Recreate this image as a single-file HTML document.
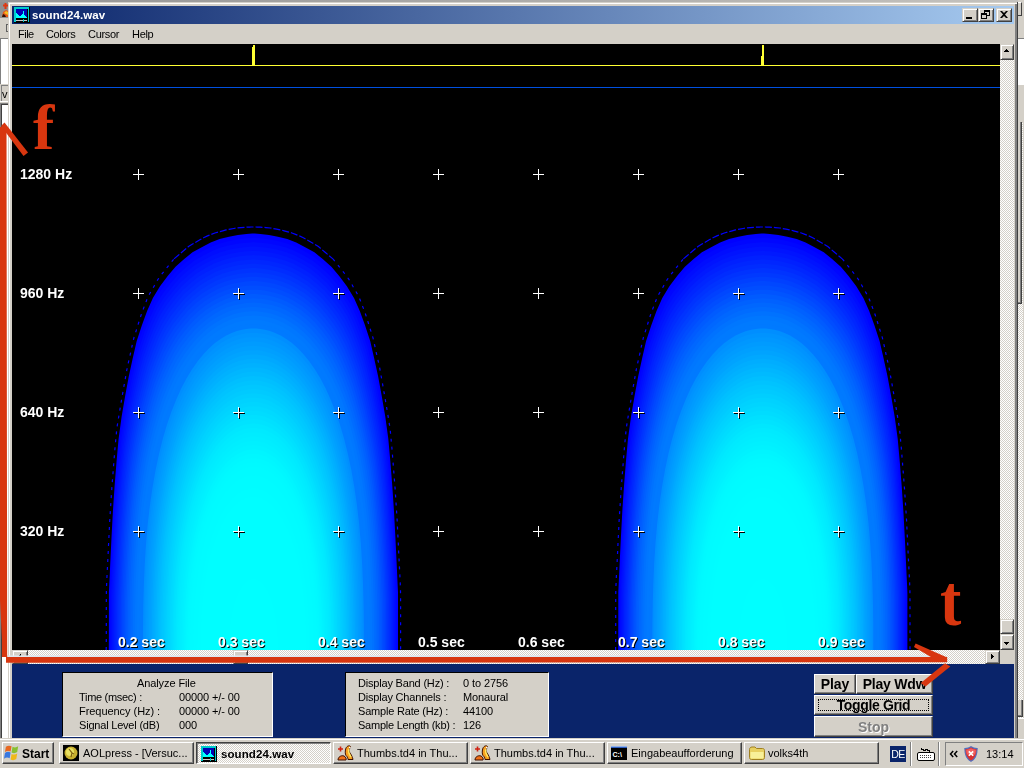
<!DOCTYPE html>
<html lang="en"><head><meta charset="utf-8"><title>sound24.wav</title>
<style>
*{margin:0;padding:0;box-sizing:border-box}
html,body{width:1024px;height:768px;overflow:hidden;background:#fff}
body{position:relative;font-family:"Liberation Sans",sans-serif;font-size:11px;color:#000;line-height:1}
.a{position:absolute}
.g{background:#d4d0c8}
.btn{position:absolute;background:#d4d0c8;border:1px solid;border-color:#d4d0c8 #404040 #404040 #d4d0c8;box-shadow:inset 1px 1px 0 #fff,inset -1px -1px 0 #808080}
.tb{position:absolute;top:742px;height:22px;width:135px;background:#d4d0c8;border:1px solid;border-color:#fff #404040 #404040 #fff;box-shadow:inset -1px -1px 0 #808080}
.tb span{will-change:transform;position:absolute;left:23px;top:5px;font-size:11px;white-space:nowrap}
.tb svg{position:absolute;left:3px;top:2px}
.chk{background:#d4d0c8 repeating-conic-gradient(#fff 0 25%,#d4d0c8 0 50%,#fff 0 75%,#d4d0c8 0 100%) 0 0/2px 2px}
.lab{will-change:transform;position:absolute;color:#fff;font:bold 14px "Liberation Sans",sans-serif;white-space:nowrap;text-shadow:1px 1px 0 #000;line-height:16px}
.t11{position:absolute;font-size:11px;white-space:nowrap;line-height:12px;will-change:transform}
.pb{will-change:transform;position:absolute;background:#d4d0c8;border:1px solid;border-color:#fff #404040 #404040 #fff;box-shadow:inset -1px -1px 0 #808080;font:bold 14px "Liberation Sans",sans-serif;text-align:center;white-space:nowrap}
</style></head><body>
<!-- background behind window: left strip -->
<div class="a" style="left:0;top:0;width:1024px;height:2px;background:linear-gradient(90deg,#949494,#c4c2be)"></div>
<div class="a" style="left:0;top:2px;width:8px;height:16px;background:#909090"></div>
<div class="a g" style="left:0;top:18px;width:8px;height:20px"></div>
<div class="a" style="left:0;top:38px;width:8px;height:46px;background:#fff;border-left:1px solid #808080;border-top:1px solid #808080"></div>
<div class="a g" style="left:0;top:84px;width:8px;height:19px"></div>
<div class="a" style="left:1px;top:85px;width:7px;height:16px;border-left:1px solid #808080;border-top:1px solid #808080"></div>
<div class="a" style="left:0;top:101px;width:8px;height:1px;background:#fff"></div>
<div class="a" style="left:0;top:103px;width:8px;height:635px;background:#fff;border-top:1px solid #808080;box-shadow:inset 1px 0 0 #808080,inset 2px 0 0 #404040,inset 0 1px 0 #404040"></div>
<svg class="a" style="left:0;top:0" width="8" height="18" viewBox="0 0 8 18"><path d="M3,5.500h5M5.500,3v6" stroke="#e03810" stroke-width="2"/><path d="M2,17l1,-5l3,-2l2,1v6z" fill="#e85818"/><path d="M4,13l2,-2l2,1v3z" fill="#f0c020"/><path d="M2,17l1,-3l2,1l1,2z" fill="#301008"/></svg>
<div class="a" style="left:6px;top:24px;width:2px;height:8px;border:1px solid #606060;border-right:0"></div>
<div class="t11" style="left:1.500px;top:88px;font-size:11px">v</div>
<!-- right strip -->
<div class="a g" style="left:1018px;top:0;width:6px;height:38px"></div>
<div class="a" style="left:1018px;top:38px;width:6px;height:1px;background:#808080"></div>
<div class="a g" style="left:1018px;top:2px;width:4px;height:14px;border-top:1px solid #fff;border-right:1px solid #404040;border-bottom:1px solid #404040"></div>
<div class="a" style="left:1018px;top:39px;width:6px;height:46px;background:#fff"></div>
<div class="a g" style="left:1018px;top:85px;width:6px;height:37px"></div>
<div class="a chk" style="left:1018px;top:122px;width:5px;height:616px"></div>
<div class="a g" style="left:1023px;top:85px;width:1px;height:653px"></div>
<div class="a g" style="left:1018px;top:122px;width:4px;height:182px;border-right:1px solid #404040;border-bottom:1px solid #404040;box-shadow:inset -1px -1px 0 #808080"></div>
<div class="a g" style="left:1018px;top:700px;width:5px;height:17px;border-right:1px solid #404040;border-bottom:1px solid #404040;box-shadow:inset -1px -1px 0 #808080"></div>
<div class="a g" style="left:1018px;top:718px;width:6px;height:20px;border-top:1px solid #fff"></div>
<!-- window frame -->
<div class="a g" style="left:8px;top:2px;width:1010px;height:736px;border-right:1px solid #404040;box-shadow:inset 1px 1px 0 #d4d0c8,inset 2px 2px 0 #fff,inset -2px 0 0 #808080"></div>
<!-- title bar -->
<div class="a" style="left:12px;top:6px;width:1002px;height:18px;background:linear-gradient(90deg,#0a246a,#a6caf0)"></div>
<div class="a" style="left:14px;top:7px;width:16px;height:16px"><svg width="16" height="16" viewBox="0 0 16 16" shape-rendering="crispEdges"><rect width="16" height="16" fill="#000"/><path d="M0,0h15v15h-1v-13h-12v13h-2z" fill="#00cccc"/><rect x="2" y="2" width="11" height="9" fill="#0000b4"/><path d="M2,6h1v5h-1zM3,7h1v4h-1zM4,8h1v3h-1zM5,9h1v2h-1zM6,9h1v2h-1zM7,8h1v3h-1zM8,7h1v4h-1zM9,4h1v7h-1zM10,8h1v3h-1zM11,9h1v2h-1zM12,10h1v1h-1z" fill="#00ffff"/><rect x="2" y="13" width="11" height="1" fill="#c8c8c8"/><rect x="9" y="12" width="1" height="3" fill="#00c0c0"/></svg></div>
<div class="a" style="left:32px;top:9px;color:#fff;font:bold 11.500px 'Liberation Sans',sans-serif;letter-spacing:0.100px;line-height:13px;white-space:nowrap;will-change:transform">sound24.wav</div>
<div class="btn" style="left:962px;top:8px;width:16px;height:14px"><div class="a" style="left:3px;top:8px;width:6px;height:2px;background:#000"></div></div>
<div class="btn" style="left:978px;top:8px;width:16px;height:14px"><svg class="a" style="left:2px;top:1px" width="10" height="10" shape-rendering="crispEdges"><path d="M3,0h6v2h-6zM3,2h1v2h-1zM8,2h1v4h-1zM6,5h3v1h-3zM0,3h6v2h-6zM0,5h1v4h-1zM5,5h1v4h-1zM0,8h6v1h-6z" fill="#000"/></svg></div>
<div class="btn" style="left:996px;top:8px;width:16px;height:14px"><svg class="a" style="left:3px;top:2px" width="9" height="8" shape-rendering="crispEdges"><path d="M0,0h2l2,2l2,-2h2l-3,3.500l3,3.500h-2l-2,-2l-2,2h-2l3,-3.500z" fill="#000" shape-rendering="auto"/></svg></div>
<!-- menu -->
<div class="t11" style="left:18px;top:28px;letter-spacing:-0.500px">File</div>
<div class="t11" style="left:46px;top:28px;letter-spacing:-0.400px">Colors</div>
<div class="t11" style="left:88px;top:28px;letter-spacing:-0.300px">Cursor</div>
<div class="t11" style="left:132px;top:28px;letter-spacing:-0.300px">Help</div>
<!-- client black -->
<div class="a" style="left:12px;top:44px;width:988px;height:606px;background:#000"></div>
<svg class="a" style="left:0;top:0" width="1024" height="768" viewBox="0 0 1024 768">
<defs><clipPath id="cl"><rect x="12" y="88" width="988" height="562"/></clipPath>
<g id="blob">
<path fill="#0000ff" d="M108.8,650.0 108.9,620.9 108.9,592.4 110.2,564.6 111.5,537.6 112.9,511.4 114.6,486.1 116.5,461.9 118.6,438.7 121.6,416.7 125.2,395.8 128.8,376.3 132.8,357.9 136.7,340.9 141.9,325.2 147.1,310.9 152.9,297.9 160.0,286.2 167.9,275.8 175.5,266.8 184.2,259.0 192.5,252.3 202.2,246.9 210.7,242.5 219.6,239.1 229.0,236.7 237.9,235.0 246.5,234.0 252.3,233.6 253.4,233.5 254.6,233.6 260.4,234.0 269.0,235.0 277.9,236.7 287.3,239.1 296.2,242.5 304.7,246.9 314.4,252.3 322.7,259.0 331.4,266.8 339.0,275.8 346.9,286.2 354.0,297.9 359.8,310.9 365.0,325.2 370.2,340.9 374.1,357.9 378.1,376.3 381.7,395.8 385.3,416.7 388.3,438.7 390.4,461.9 392.3,486.1 394.0,511.4 395.4,537.6 396.7,564.6 398.0,592.4 398.0,620.9 398.0,650.0Z"/>
<path fill="#0006ff" d="M109.9,650.0 110.0,621.2 110.1,593.0 111.3,565.5 112.6,538.7 114.0,512.8 115.7,487.8 117.6,463.8 119.7,440.9 122.8,419.1 126.4,398.5 130.0,379.1 134.0,361.0 138.0,344.1 143.2,328.6 148.4,314.4 154.3,301.5 161.3,290.0 169.1,279.7 176.6,270.8 185.3,263.0 193.5,256.5 202.9,251.1 211.4,246.7 220.1,243.4 229.3,240.9 238.0,239.3 246.4,238.3 252.2,237.9 253.4,237.8 254.7,237.9 260.5,238.3 268.9,239.3 277.6,240.9 286.8,243.4 295.5,246.7 304.0,251.1 313.4,256.5 321.6,263.0 330.3,270.8 337.8,279.7 345.6,290.0 352.6,301.5 358.5,314.4 363.7,328.6 368.9,344.1 372.9,361.0 376.9,379.1 380.5,398.5 384.1,419.1 387.2,440.9 389.3,463.8 391.2,487.8 392.9,512.8 394.3,538.7 395.6,565.5 396.8,593.0 396.9,621.2 397.0,650.0Z"/>
<path fill="#000dff" d="M111.1,650.0 111.1,621.5 111.2,593.6 112.4,566.4 113.6,539.9 115.1,514.2 116.8,489.5 118.7,465.8 120.9,443.1 124.0,421.5 127.6,401.1 131.2,381.9 135.3,364.0 139.4,347.3 144.5,332.0 149.8,317.9 155.7,305.2 162.6,293.8 170.4,283.6 177.8,274.7 186.3,267.1 194.4,260.6 203.7,255.2 212.0,251.0 220.6,247.6 229.6,245.2 238.2,243.6 246.4,242.7 252.1,242.2 253.4,242.1 254.8,242.2 260.5,242.7 268.7,243.6 277.3,245.2 286.3,247.6 294.9,251.0 303.2,255.2 312.5,260.6 320.6,267.1 329.1,274.7 336.5,283.6 344.3,293.8 351.2,305.2 357.1,317.9 362.4,332.0 367.5,347.3 371.6,364.0 375.7,381.9 379.3,401.1 382.9,421.5 386.0,443.1 388.2,465.8 390.1,489.5 391.8,514.2 393.3,539.9 394.5,566.4 395.7,593.6 395.8,621.5 395.8,650.0Z"/>
<path fill="#0013ff" d="M112.2,650.0 112.2,621.8 112.3,594.2 113.5,567.3 114.7,541.1 116.2,515.7 117.9,491.2 119.9,467.7 122.1,445.3 125.2,423.9 128.8,403.8 132.5,384.8 136.6,367.0 140.7,350.5 145.9,335.3 151.1,321.4 157.0,308.8 163.9,297.5 171.6,287.5 179.0,278.7 187.3,271.1 195.3,264.7 204.5,259.4 212.6,255.2 221.1,251.9 229.9,249.5 238.3,247.9 246.4,247.0 252.0,246.5 253.4,246.5 254.9,246.5 260.5,247.0 268.6,247.9 277.0,249.5 285.8,251.9 294.3,255.2 302.4,259.4 311.6,264.7 319.6,271.1 327.9,278.7 335.3,287.5 343.0,297.5 349.9,308.8 355.8,321.4 361.0,335.3 366.2,350.5 370.3,367.0 374.4,384.8 378.1,403.8 381.7,423.9 384.8,445.3 387.0,467.7 389.0,491.2 390.7,515.7 392.2,541.1 393.4,567.3 394.6,594.2 394.7,621.8 394.7,650.0Z"/>
<path fill="#0019ff" d="M113.3,650.0 113.4,622.1 113.5,594.8 114.6,568.2 115.8,542.2 117.3,517.1 119.0,492.9 121.0,469.7 123.3,447.5 126.4,426.4 130.0,406.4 133.7,387.6 137.8,370.1 142.0,353.8 147.2,338.7 152.5,325.0 158.4,312.5 165.2,301.3 172.8,291.4 180.1,282.7 188.4,275.2 196.3,268.8 205.2,263.6 213.3,259.4 221.6,256.2 230.2,253.8 238.4,252.2 246.3,251.3 251.9,250.9 253.4,250.8 255.0,250.9 260.6,251.3 268.5,252.2 276.7,253.8 285.3,256.2 293.6,259.4 301.7,263.6 310.6,268.8 318.5,275.2 326.8,282.7 334.1,291.4 341.7,301.3 348.5,312.5 354.4,325.0 359.7,338.7 364.9,353.8 369.1,370.1 373.2,387.6 376.9,406.4 380.5,426.4 383.6,447.5 385.9,469.7 387.9,492.9 389.6,517.1 391.1,542.2 392.3,568.2 393.4,594.8 393.5,622.1 393.6,650.0Z"/>
<path fill="#0020ff" d="M114.5,650.0 114.5,622.4 114.7,595.4 115.7,569.0 117.0,543.4 118.4,518.6 120.2,494.6 122.2,471.6 124.5,449.7 127.6,428.8 131.2,409.0 135.0,390.5 139.1,373.1 143.4,357.0 148.6,342.1 153.9,328.5 159.7,316.1 166.6,305.1 174.0,295.3 181.3,286.7 189.4,279.2 197.2,273.0 206.0,267.8 213.9,263.6 222.1,260.4 230.5,258.1 238.6,256.5 246.3,255.6 251.8,255.2 253.4,255.1 255.1,255.2 260.6,255.6 268.3,256.5 276.4,258.1 284.8,260.4 293.0,263.6 300.9,267.8 309.7,273.0 317.5,279.2 325.6,286.7 332.9,295.3 340.3,305.1 347.2,316.1 353.0,328.5 358.3,342.1 363.5,357.0 367.8,373.1 371.9,390.5 375.7,409.0 379.3,428.8 382.4,449.7 384.7,471.6 386.7,494.6 388.5,518.6 389.9,543.4 391.2,569.0 392.2,595.4 392.4,622.4 392.4,650.0Z"/>
<path fill="#0026ff" d="M115.7,650.0 115.7,622.7 115.9,596.0 116.9,569.9 118.1,544.6 119.6,520.0 121.3,496.3 123.4,473.6 125.7,451.9 128.8,431.2 132.5,411.7 136.3,393.3 140.4,376.1 144.7,360.2 149.9,345.5 155.2,332.0 161.1,319.8 167.9,308.9 175.3,299.1 182.4,290.6 190.5,283.3 198.1,277.1 206.8,272.0 214.6,267.9 222.6,264.7 230.9,262.4 238.7,260.8 246.3,259.9 251.7,259.5 253.4,259.4 255.2,259.5 260.6,259.9 268.2,260.8 276.0,262.4 284.3,264.7 292.3,267.9 300.1,272.0 308.8,277.1 316.4,283.3 324.5,290.6 331.6,299.1 339.0,308.9 345.8,319.8 351.7,332.0 357.0,345.5 362.2,360.2 366.5,376.1 370.6,393.3 374.4,411.7 378.1,431.2 381.2,451.9 383.5,473.6 385.6,496.3 387.3,520.0 388.8,544.6 390.0,569.9 391.0,596.0 391.2,622.7 391.2,650.0Z"/>
<path fill="#002cff" d="M116.9,650.0 116.9,623.0 117.1,596.6 118.1,570.8 119.3,545.7 120.7,521.4 122.5,498.0 124.6,475.5 126.9,454.0 130.1,433.6 133.7,414.3 137.6,396.1 141.8,379.1 146.1,363.4 151.3,348.8 156.6,335.5 162.5,323.5 169.2,312.6 176.5,303.0 183.6,294.6 191.5,287.4 199.1,281.2 207.5,276.2 215.2,272.1 223.1,269.0 231.2,266.7 238.9,265.1 246.2,264.2 251.6,263.8 253.4,263.7 255.3,263.8 260.7,264.2 268.0,265.1 275.7,266.7 283.8,269.0 291.7,272.1 299.4,276.2 307.8,281.2 315.4,287.4 323.3,294.6 330.4,303.0 337.7,312.6 344.4,323.5 350.3,335.5 355.6,348.8 360.8,363.4 365.1,379.1 369.3,396.1 373.2,414.3 376.8,433.6 380.0,454.0 382.3,475.5 384.4,498.0 386.2,521.4 387.6,545.7 388.8,570.8 389.8,596.6 390.0,623.0 390.0,650.0Z"/>
<path fill="#0033ff" d="M118.1,650.0 118.2,623.3 118.3,597.2 119.3,571.7 120.5,546.9 121.9,522.9 123.7,499.7 125.8,477.5 128.2,456.2 131.4,436.0 135.0,416.9 138.9,399.0 143.1,382.2 147.5,366.6 152.7,352.2 158.0,339.0 163.9,327.1 170.5,316.4 177.7,306.9 184.8,298.6 192.5,291.4 200.0,285.3 208.3,280.3 215.9,276.3 223.6,273.2 231.5,271.0 239.0,269.4 246.2,268.5 251.5,268.1 253.4,268.1 255.4,268.1 260.7,268.5 267.9,269.4 275.4,271.0 283.3,273.2 291.0,276.3 298.6,280.3 306.9,285.3 314.4,291.4 322.1,298.6 329.2,306.9 336.4,316.4 343.0,327.1 348.9,339.0 354.2,352.2 359.4,366.6 363.8,382.2 368.0,399.0 371.9,416.9 375.5,436.0 378.7,456.2 381.1,477.5 383.2,499.7 385.0,522.9 386.4,546.9 387.6,571.7 388.6,597.2 388.7,623.3 388.8,650.0Z"/>
<path fill="#0039ff" d="M119.4,650.0 119.4,623.6 119.6,597.8 120.6,572.6 121.7,548.1 123.2,524.3 125.0,501.4 127.1,479.4 129.5,458.4 132.7,438.5 136.3,419.6 140.2,401.8 144.4,385.2 148.9,369.8 154.1,355.6 159.4,342.6 165.3,330.8 171.9,320.2 179.0,310.8 185.9,302.6 193.6,295.5 201.0,289.5 209.1,284.5 216.5,280.5 224.1,277.5 231.8,275.3 239.2,273.7 246.2,272.9 251.4,272.5 253.4,272.4 255.5,272.5 260.7,272.9 267.7,273.7 275.1,275.3 282.8,277.5 290.4,280.5 297.8,284.5 305.9,289.5 313.3,295.5 321.0,302.6 327.9,310.8 335.0,320.2 341.6,330.8 347.5,342.6 352.8,355.6 358.0,369.8 362.5,385.2 366.7,401.8 370.6,419.6 374.2,438.5 377.4,458.4 379.8,479.4 381.9,501.4 383.7,524.3 385.2,548.1 386.3,572.6 387.3,597.8 387.5,623.6 387.5,650.0Z"/>
<path fill="#0040ff" d="M120.7,650.0 120.7,623.9 120.9,598.4 121.8,573.5 123.0,549.2 124.4,525.8 126.2,503.1 128.3,481.4 130.8,460.6 134.0,440.9 137.7,422.2 141.5,404.7 145.8,388.2 150.3,373.0 155.5,358.9 160.8,346.1 166.7,334.4 173.2,324.0 180.2,314.7 187.1,306.5 194.6,299.5 201.9,293.6 209.9,288.7 217.2,284.8 224.6,281.7 232.2,279.5 239.4,278.1 246.2,277.2 251.3,276.8 253.4,276.7 255.6,276.8 260.7,277.2 267.5,278.1 274.7,279.5 282.3,281.7 289.7,284.8 297.0,288.7 305.0,293.6 312.3,299.5 319.8,306.5 326.7,314.7 333.7,324.0 340.2,334.4 346.1,346.1 351.4,358.9 356.6,373.0 361.1,388.2 365.4,404.7 369.2,422.2 372.9,440.9 376.1,460.6 378.6,481.4 380.7,503.1 382.5,525.8 383.9,549.2 385.1,573.5 386.0,598.4 386.2,623.9 386.2,650.0Z"/>
<path fill="#0047ff" d="M122.0,650.0 122.1,624.2 122.2,599.0 123.1,574.4 124.3,550.4 125.7,527.2 127.5,504.8 129.7,483.3 132.1,462.8 135.3,443.3 139.0,424.8 142.9,407.5 147.2,391.3 151.7,376.2 156.9,362.3 162.3,349.6 168.1,338.1 174.5,327.7 181.5,318.5 188.3,310.5 195.7,303.6 202.9,297.7 210.6,292.9 217.9,289.0 225.2,286.0 232.5,283.8 239.5,282.4 246.1,281.5 251.2,281.1 253.4,281.0 255.7,281.1 260.8,281.5 267.4,282.4 274.4,283.8 281.7,286.0 289.0,289.0 296.3,292.9 304.0,297.7 311.2,303.6 318.6,310.5 325.4,318.5 332.4,327.7 338.8,338.1 344.6,349.6 350.0,362.3 355.2,376.2 359.7,391.3 364.0,407.5 367.9,424.8 371.6,443.3 374.8,462.8 377.2,483.3 379.4,504.8 381.2,527.2 382.6,550.4 383.8,574.4 384.7,599.0 384.8,624.2 384.9,650.0Z"/>
<path fill="#004dff" d="M123.4,650.0 123.4,624.5 123.6,599.6 124.5,575.2 125.6,551.6 127.0,528.6 128.9,506.5 131.0,485.3 133.5,465.0 136.7,445.7 140.4,427.5 144.3,410.3 148.6,394.3 153.1,379.4 158.3,365.7 163.7,353.1 169.5,341.7 175.9,331.5 182.7,322.4 189.5,314.5 196.8,307.6 203.8,301.8 211.4,297.1 218.5,293.2 225.7,290.3 232.8,288.1 239.7,286.7 246.1,285.8 251.1,285.4 253.4,285.4 255.8,285.4 260.8,285.8 267.2,286.7 274.1,288.1 281.2,290.3 288.4,293.2 295.5,297.1 303.1,301.8 310.1,307.6 317.4,314.5 324.2,322.4 331.0,331.5 337.4,341.7 343.2,353.1 348.6,365.7 353.8,379.4 358.3,394.3 362.6,410.3 366.5,427.5 370.2,445.7 373.4,465.0 375.9,485.3 378.0,506.5 379.9,528.6 381.3,551.6 382.4,575.2 383.3,599.6 383.5,624.5 383.5,650.0Z"/>
<path fill="#0054ff" d="M124.8,650.0 124.8,624.8 125.0,600.2 125.9,576.1 127.0,552.7 128.4,530.1 130.2,508.2 132.4,487.2 134.9,467.2 138.1,448.1 141.8,430.1 145.7,413.2 150.1,397.3 154.6,382.6 159.8,369.0 165.2,356.6 171.0,345.4 177.3,335.3 184.0,326.3 190.7,318.5 197.8,311.7 204.8,306.0 212.2,301.2 219.2,297.5 226.2,294.5 233.2,292.4 239.8,291.0 246.1,290.1 251.0,289.7 253.4,289.7 255.9,289.7 260.8,290.1 267.1,291.0 273.7,292.4 280.7,294.5 287.7,297.5 294.7,301.2 302.1,306.0 309.1,311.7 316.2,318.5 322.9,326.3 329.6,335.3 335.9,345.4 341.7,356.6 347.1,369.0 352.3,382.6 356.8,397.3 361.2,413.2 365.1,430.1 368.8,448.1 372.0,467.2 374.5,487.2 376.7,508.2 378.5,530.1 379.9,552.7 381.0,576.1 381.9,600.2 382.1,624.8 382.1,650.0Z"/>
<path fill="#005bff" d="M126.2,650.0 126.3,625.2 126.5,600.8 127.3,577.0 128.4,553.9 129.8,531.5 131.6,509.9 133.8,489.2 136.4,469.4 139.6,450.6 143.3,432.8 147.2,416.0 151.5,400.4 156.1,385.8 161.3,372.4 166.7,360.1 172.4,349.0 178.7,339.0 185.3,330.2 191.9,322.4 198.9,315.8 205.8,310.1 213.0,305.4 219.9,301.7 226.7,298.8 233.5,296.7 240.0,295.3 246.1,294.4 250.9,294.1 253.4,294.0 256.0,294.1 260.8,294.4 266.9,295.3 273.4,296.7 280.2,298.8 287.0,301.7 293.9,305.4 301.1,310.1 308.0,315.8 315.0,322.4 321.6,330.2 328.2,339.0 334.5,349.0 340.2,360.1 345.6,372.4 350.8,385.8 355.4,400.4 359.7,416.0 363.6,432.8 367.3,450.6 370.5,469.4 373.1,489.2 375.3,509.9 377.1,531.5 378.5,553.9 379.6,577.0 380.4,600.8 380.6,625.2 380.7,650.0Z"/>
<path fill="#0061ff" d="M127.8,650.0 127.8,625.5 128.0,601.4 128.8,577.9 129.9,555.1 131.3,532.9 133.1,511.6 135.3,491.1 137.9,471.6 141.1,453.0 144.7,435.4 148.7,418.9 153.0,403.4 157.7,389.0 162.8,375.8 168.2,363.7 173.9,352.7 180.1,342.8 186.6,334.1 193.1,326.4 200.0,319.8 206.8,314.2 213.8,309.6 220.6,305.9 227.2,303.1 233.9,301.0 240.2,299.6 246.1,298.8 250.8,298.4 253.4,298.3 256.1,298.4 260.8,298.8 266.7,299.6 273.0,301.0 279.7,303.1 286.3,305.9 293.1,309.6 300.1,314.2 306.9,319.8 313.8,326.4 320.3,334.1 326.8,342.8 333.0,352.7 338.7,363.7 344.1,375.8 349.2,389.0 353.9,403.4 358.2,418.9 362.2,435.4 365.8,453.0 369.0,471.6 371.6,491.1 373.8,511.6 375.6,532.9 377.0,555.1 378.1,577.9 378.9,601.4 379.1,625.5 379.1,650.0Z"/>
<path fill="#0067ff" d="M129.3,650.0 129.4,625.8 129.6,602.0 130.4,578.8 131.4,556.2 132.8,534.4 134.7,513.3 136.9,493.1 139.5,473.8 142.7,455.4 146.3,438.0 150.3,421.7 154.6,406.4 159.2,392.2 164.4,379.1 169.7,367.2 175.4,356.3 181.5,346.6 188.0,338.0 194.4,330.4 201.1,323.9 207.8,318.4 214.7,313.8 221.2,310.1 227.8,307.3 234.2,305.3 240.4,303.9 246.1,303.1 250.8,302.7 253.4,302.6 256.1,302.7 260.8,303.1 266.5,303.9 272.7,305.3 279.1,307.3 285.7,310.1 292.2,313.8 299.1,318.4 305.8,323.9 312.5,330.4 318.9,338.0 325.4,346.6 331.5,356.3 337.2,367.2 342.5,379.1 347.7,392.2 352.3,406.4 356.6,421.7 360.6,438.0 364.2,455.4 367.4,473.8 370.0,493.1 372.2,513.3 374.1,534.4 375.5,556.2 376.5,578.8 377.3,602.0 377.5,625.8 377.6,650.0Z"/>
<path fill="#006cff" d="M131.0,650.0 131.1,626.1 131.3,602.6 132.0,579.7 133.1,557.4 134.5,535.8 136.3,515.0 138.5,495.0 141.1,476.0 144.3,457.8 147.9,440.7 151.9,424.5 156.2,409.4 160.9,395.4 166.0,382.5 171.3,370.7 177.0,360.0 183.0,350.4 189.3,341.8 195.7,334.4 202.3,327.9 208.8,322.5 215.5,318.0 222.0,314.4 228.3,311.6 234.6,309.6 240.6,308.2 246.1,307.4 250.7,307.0 253.4,307.0 256.2,307.0 260.8,307.4 266.3,308.2 272.3,309.6 278.6,311.6 284.9,314.4 291.4,318.0 298.1,322.5 304.6,327.9 311.2,334.4 317.6,341.8 323.9,350.4 329.9,360.0 335.6,370.7 340.9,382.5 346.0,395.4 350.7,409.4 355.0,424.5 359.0,440.7 362.6,457.8 365.8,476.0 368.4,495.0 370.6,515.0 372.4,535.8 373.8,557.4 374.9,579.7 375.6,602.6 375.8,626.1 375.9,650.0Z"/>
<path fill="#0072ff" d="M132.8,650.0 132.9,626.4 133.1,603.2 133.8,580.6 134.8,558.6 136.2,537.3 138.0,516.7 140.2,497.0 142.9,478.2 146.0,460.2 149.6,443.3 153.6,427.4 157.9,412.5 162.6,398.6 167.7,385.9 173.0,374.2 178.6,363.6 184.6,354.1 190.8,345.7 197.0,338.3 203.4,332.0 209.8,326.6 216.4,322.2 222.7,318.6 228.9,315.9 235.0,313.8 240.8,312.5 246.2,311.7 250.6,311.3 253.4,311.3 256.3,311.3 260.7,311.7 266.1,312.5 271.9,313.8 278.0,315.9 284.2,318.6 290.5,322.2 297.1,326.6 303.5,332.0 309.9,338.3 316.1,345.7 322.3,354.1 328.3,363.6 333.9,374.2 339.2,385.9 344.3,398.6 349.0,412.5 353.3,427.4 357.3,443.3 360.9,460.2 364.0,478.2 366.7,497.0 368.9,516.7 370.7,537.3 372.1,558.6 373.1,580.6 373.8,603.2 374.0,626.4 374.1,650.0Z"/>
<path fill="#0077ff" d="M134.7,650.0 134.8,626.7 135.1,603.8 135.7,581.4 136.7,559.7 138.1,538.7 139.9,518.4 142.1,499.0 144.8,480.4 147.9,462.7 151.5,445.9 155.4,430.2 159.8,415.5 164.4,401.8 169.4,389.3 174.7,377.7 180.3,367.3 186.2,357.9 192.2,349.6 198.4,342.3 204.7,336.0 210.9,330.7 217.3,326.3 223.5,322.8 229.5,320.1 235.4,318.1 241.0,316.8 246.2,316.0 250.6,315.7 253.4,315.6 256.3,315.7 260.7,316.0 265.9,316.8 271.5,318.1 277.4,320.1 283.4,322.8 289.6,326.3 296.0,330.7 302.2,336.0 308.5,342.3 314.7,349.6 320.7,357.9 326.6,367.3 332.2,377.7 337.5,389.3 342.5,401.8 347.1,415.5 351.5,430.2 355.4,445.9 359.0,462.7 362.1,480.4 364.8,499.0 367.0,518.4 368.8,538.7 370.2,559.7 371.2,581.4 371.8,603.8 372.1,626.7 372.2,650.0Z"/>
<path fill="#007aff" d="M136.9,650.0 137.0,627.0 137.2,604.4 137.9,582.3 138.8,560.9 140.2,540.1 142.0,520.1 144.2,500.9 146.9,482.5 150.0,465.1 153.5,448.6 157.5,433.1 161.8,418.5 166.4,405.1 171.4,392.6 176.6,381.3 182.1,370.9 187.9,361.7 193.8,353.5 199.8,346.3 206.0,340.1 212.1,334.9 218.3,330.5 224.3,327.1 230.1,324.4 235.8,322.4 241.2,321.1 246.3,320.3 250.5,320.0 253.4,319.9 256.4,320.0 260.6,320.3 265.7,321.1 271.1,322.4 276.8,324.4 282.6,327.1 288.6,330.5 294.8,334.9 300.9,340.1 307.1,346.3 313.1,353.5 319.0,361.7 324.8,370.9 330.3,381.3 335.5,392.6 340.5,405.1 345.1,418.5 349.4,433.1 353.4,448.6 356.9,465.1 360.0,482.5 362.7,500.9 364.9,520.1 366.7,540.1 368.1,560.9 369.0,582.3 369.7,604.4 369.9,627.0 370.0,650.0Z"/>
<path fill="#007aff" d="M139.6,650.0 139.7,627.3 139.9,605.0 140.5,583.2 141.4,562.1 142.8,541.6 144.6,521.8 146.8,502.9 149.4,484.7 152.5,467.5 156.0,451.2 159.9,435.9 164.1,421.6 168.7,408.3 173.6,396.0 178.8,384.8 184.2,374.6 189.9,365.5 195.6,357.4 201.5,350.3 207.5,344.2 213.4,339.0 219.4,334.7 225.2,331.3 230.9,328.6 236.4,326.7 241.5,325.4 246.3,324.7 250.5,324.3 253.4,324.2 256.4,324.3 260.6,324.7 265.4,325.4 270.5,326.7 276.0,328.6 281.7,331.3 287.5,334.7 293.5,339.0 299.4,344.2 305.4,350.3 311.3,357.4 317.0,365.5 322.7,374.6 328.1,384.8 333.3,396.0 338.2,408.3 342.8,421.6 347.0,435.9 350.9,451.2 354.4,467.5 357.5,484.7 360.1,502.9 362.3,521.8 364.1,541.6 365.5,562.1 366.4,583.2 367.0,605.0 367.2,627.3 367.3,650.0Z"/>
<path fill="#008eff" d="M143.0,650.0 143.0,627.6 143.3,605.6 143.9,584.1 144.8,563.2 146.1,543.0 147.8,523.5 150.0,504.8 152.6,486.9 155.6,469.9 159.0,453.9 162.8,438.7 167.0,424.6 171.5,411.5 176.3,399.4 181.3,388.3 186.6,378.3 192.1,369.2 197.7,361.2 203.4,354.2 209.1,348.2 214.9,343.1 220.6,338.9 226.2,335.5 231.7,332.9 236.9,331.0 241.9,329.7 246.5,329.0 250.5,328.6 253.4,328.6 256.4,328.6 260.4,329.0 265.0,329.7 270.0,331.0 275.2,332.9 280.7,335.5 286.3,338.9 292.0,343.1 297.8,348.2 303.5,354.2 309.2,361.2 314.8,369.2 320.3,378.3 325.6,388.3 330.6,399.4 335.4,411.5 339.9,424.6 344.1,438.7 347.9,453.9 351.3,469.9 354.3,486.9 356.9,504.8 359.1,523.5 360.8,543.0 362.1,563.2 363.0,584.1 363.6,605.6 363.9,627.6 363.9,650.0Z"/>
<path fill="#0093ff" d="M144.5,650.0 144.5,627.9 144.8,606.2 145.3,585.0 146.3,564.4 147.6,544.5 149.3,525.2 151.4,506.8 154.0,489.1 157.0,472.4 160.4,456.5 164.2,441.6 168.3,427.6 172.7,414.7 177.4,402.7 182.4,391.8 187.6,381.9 193.0,373.0 198.5,365.1 204.2,358.2 209.8,352.3 215.5,347.2 221.1,343.1 226.7,339.7 232.0,337.2 237.2,335.3 242.1,334.0 246.6,333.3 250.6,332.9 253.4,332.9 256.3,332.9 260.3,333.3 264.8,334.0 269.7,335.3 274.9,337.2 280.2,339.7 285.8,343.1 291.4,347.2 297.1,352.3 302.7,358.2 308.4,365.1 313.9,373.0 319.3,381.9 324.5,391.8 329.5,402.7 334.2,414.7 338.6,427.6 342.7,441.6 346.5,456.5 349.9,472.4 352.9,489.1 355.5,506.8 357.6,525.2 359.3,544.5 360.6,564.4 361.6,585.0 362.1,606.2 362.4,627.9 362.4,650.0Z"/>
<path fill="#0097ff" d="M145.9,650.0 146.0,628.2 146.2,606.8 146.8,585.9 147.7,565.6 149.0,545.9 150.7,526.9 152.9,508.7 155.4,491.3 158.4,474.8 161.7,459.1 165.5,444.4 169.5,430.7 173.9,417.9 178.6,406.1 183.5,395.3 188.7,385.6 194.0,376.8 199.4,369.0 204.9,362.2 210.5,356.3 216.1,351.4 221.6,347.3 227.1,344.0 232.4,341.4 237.5,339.6 242.3,338.3 246.7,337.6 250.6,337.3 253.4,337.2 256.3,337.3 260.2,337.6 264.6,338.3 269.4,339.6 274.5,341.4 279.8,344.0 285.3,347.3 290.8,351.4 296.4,356.3 302.0,362.2 307.5,369.0 312.9,376.8 318.2,385.6 323.4,395.3 328.3,406.1 333.0,417.9 337.4,430.7 341.4,444.4 345.2,459.1 348.5,474.8 351.5,491.3 354.0,508.7 356.2,526.9 357.9,545.9 359.2,565.6 360.1,585.9 360.7,606.8 360.9,628.2 361.0,650.0Z"/>
<path fill="#009bff" d="M147.4,650.0 147.4,628.5 147.7,607.4 148.3,586.8 149.2,566.7 150.5,547.3 152.2,528.6 154.3,510.7 156.9,493.5 159.8,477.2 163.1,461.8 166.8,447.3 170.8,433.7 175.1,421.1 179.7,409.5 184.6,398.8 189.7,389.2 194.9,380.6 200.3,372.9 205.7,366.2 211.2,360.4 216.7,355.5 222.2,351.4 227.5,348.2 232.7,345.7 237.8,343.9 242.5,342.6 246.9,341.9 250.7,341.6 253.4,341.5 256.2,341.6 260.0,341.9 264.4,342.6 269.1,343.9 274.2,345.7 279.4,348.2 284.7,351.4 290.2,355.5 295.7,360.4 301.2,366.2 306.6,372.9 312.0,380.6 317.2,389.2 322.3,398.8 327.2,409.5 331.8,421.1 336.1,433.7 340.1,447.3 343.8,461.8 347.1,477.2 350.0,493.5 352.6,510.7 354.7,528.6 356.4,547.3 357.7,566.7 358.6,586.8 359.2,607.4 359.5,628.5 359.5,650.0Z"/>
<path fill="#009fff" d="M148.9,650.0 148.9,628.8 149.2,608.0 149.8,587.6 150.7,567.9 152.0,548.8 153.7,530.3 155.8,512.6 158.3,495.7 161.2,479.6 164.4,464.4 168.1,450.1 172.1,436.7 176.3,424.3 180.9,412.8 185.7,402.4 190.7,392.9 195.8,384.3 201.1,376.8 206.5,370.1 211.9,364.4 217.3,359.6 222.7,355.6 228.0,352.4 233.1,350.0 238.0,348.2 242.7,346.9 247.0,346.2 250.7,345.9 253.4,345.8 256.2,345.9 259.9,346.2 264.2,346.9 268.9,348.2 273.8,350.0 278.9,352.4 284.2,355.6 289.6,359.6 295.0,364.4 300.4,370.1 305.8,376.8 311.1,384.3 316.2,392.9 321.2,402.4 326.0,412.8 330.6,424.3 334.8,436.7 338.8,450.1 342.5,464.4 345.7,479.6 348.6,495.7 351.1,512.6 353.2,530.3 354.9,548.8 356.2,567.9 357.1,587.6 357.7,608.0 358.0,628.8 358.0,650.0Z"/>
<path fill="#00a3ff" d="M150.3,650.0 150.4,629.1 150.7,608.6 151.2,588.5 152.1,569.1 153.4,550.2 155.1,532.0 157.2,514.6 159.7,497.9 162.6,482.0 165.8,467.0 169.4,452.9 173.3,439.7 177.5,427.5 182.0,416.2 186.8,405.9 191.7,396.5 196.8,388.1 202.0,380.7 207.3,374.1 212.6,368.5 217.9,363.7 223.2,359.8 228.4,356.6 233.4,354.2 238.3,352.4 242.9,351.2 247.1,350.5 250.8,350.2 253.4,350.2 256.1,350.2 259.8,350.5 264.0,351.2 268.6,352.4 273.5,354.2 278.5,356.6 283.7,359.8 289.0,363.7 294.3,368.5 299.6,374.1 304.9,380.7 310.1,388.1 315.2,396.5 320.1,405.9 324.9,416.2 329.4,427.5 333.6,439.7 337.5,452.9 341.1,467.0 344.3,482.0 347.2,497.9 349.7,514.6 351.8,532.0 353.5,550.2 354.8,569.1 355.7,588.5 356.2,608.6 356.5,629.1 356.6,650.0Z"/>
<path fill="#00a8ff" d="M151.8,650.0 151.9,629.4 152.1,609.2 152.7,589.4 153.6,570.2 154.9,551.6 156.6,533.7 158.6,516.5 161.1,500.1 163.9,484.5 167.1,469.7 170.7,455.8 174.6,442.8 178.7,430.7 183.2,419.6 187.8,409.4 192.7,400.2 197.7,391.9 202.8,384.5 208.0,378.1 213.3,372.6 218.5,367.9 223.7,364.0 228.8,360.9 233.8,358.5 238.6,356.7 243.1,355.6 247.2,354.9 250.8,354.6 253.4,354.5 256.1,354.6 259.7,354.9 263.8,355.6 268.3,356.7 273.1,358.5 278.1,360.9 283.2,364.0 288.4,367.9 293.6,372.6 298.9,378.1 304.1,384.5 309.2,391.9 314.2,400.2 319.1,409.4 323.7,419.6 328.2,430.7 332.3,442.8 336.2,455.8 339.8,469.7 343.0,484.5 345.8,500.1 348.3,516.5 350.3,533.7 352.0,551.6 353.3,570.2 354.2,589.4 354.8,609.2 355.0,629.4 355.1,650.0Z"/>
<path fill="#00adff" d="M153.3,650.0 153.3,629.7 153.6,609.8 154.2,590.3 155.1,571.4 156.4,553.1 158.0,535.4 160.1,518.5 162.5,502.3 165.3,486.9 168.5,472.3 172.0,458.6 175.8,445.8 179.9,433.9 184.3,422.9 188.9,412.9 193.7,403.8 198.6,395.7 203.7,388.4 208.8,382.1 214.0,376.6 219.1,372.0 224.2,368.2 229.3,365.1 234.1,362.7 238.8,361.0 243.3,359.9 247.3,359.2 250.9,358.9 253.4,358.8 256.0,358.9 259.6,359.2 263.6,359.9 268.1,361.0 272.8,362.7 277.6,365.1 282.7,368.2 287.8,372.0 292.9,376.6 298.1,382.1 303.2,388.4 308.3,395.7 313.2,403.8 318.0,412.9 322.6,422.9 327.0,433.9 331.1,445.8 334.9,458.6 338.4,472.3 341.6,486.9 344.4,502.3 346.8,518.5 348.9,535.4 350.5,553.1 351.8,571.4 352.7,590.3 353.3,609.8 353.6,629.7 353.6,650.0Z"/>
<path fill="#00b1ff" d="M154.8,650.0 154.8,630.0 155.1,610.4 155.7,591.2 156.6,572.6 157.8,554.5 159.5,537.1 161.5,520.4 163.9,504.5 166.7,489.3 169.8,474.9 173.3,461.5 177.1,448.8 181.1,437.1 185.4,426.3 190.0,416.4 194.7,407.5 199.5,399.4 204.5,392.3 209.6,386.0 214.6,380.7 219.7,376.1 224.7,372.3 229.7,369.3 234.5,367.0 239.1,365.3 243.4,364.2 247.4,363.5 250.9,363.2 253.4,363.1 256.0,363.2 259.5,363.5 263.5,364.2 267.8,365.3 272.4,367.0 277.2,369.3 282.2,372.3 287.2,376.1 292.3,380.7 297.3,386.0 302.4,392.3 307.4,399.4 312.2,407.5 316.9,416.4 321.5,426.3 325.8,437.1 329.8,448.8 333.6,461.5 337.1,474.9 340.2,489.3 343.0,504.5 345.4,520.4 347.4,537.1 349.1,554.5 350.3,572.6 351.2,591.2 351.8,610.4 352.1,630.0 352.1,650.0Z"/>
<path fill="#00b6ff" d="M156.2,650.0 156.3,630.3 156.6,610.9 157.1,592.1 158.0,573.7 159.3,556.0 160.9,538.8 162.9,522.4 165.3,506.7 168.1,491.7 171.2,477.6 174.6,464.3 178.3,451.9 182.3,440.3 186.6,429.7 191.0,420.0 195.7,411.1 200.4,403.2 205.3,396.2 210.3,390.0 215.3,384.7 220.3,380.2 225.2,376.5 230.1,373.6 234.8,371.3 239.4,369.6 243.6,368.5 247.6,367.8 251.0,367.5 253.4,367.5 255.9,367.5 259.3,367.8 263.3,368.5 267.5,369.6 272.1,371.3 276.8,373.6 281.7,376.5 286.6,380.2 291.6,384.7 296.6,390.0 301.6,396.2 306.5,403.2 311.2,411.1 315.9,420.0 320.3,429.7 324.6,440.3 328.6,451.9 332.3,464.3 335.7,477.6 338.8,491.7 341.6,506.7 344.0,522.4 346.0,538.8 347.6,556.0 348.9,573.7 349.8,592.1 350.3,610.9 350.6,630.3 350.7,650.0Z"/>
<path fill="#00baff" d="M157.7,650.0 157.8,630.6 158.0,611.5 158.6,593.0 159.5,574.9 160.8,557.4 162.4,540.5 164.4,524.3 166.7,508.9 169.5,494.1 172.5,480.2 175.9,467.1 179.6,454.9 183.5,443.5 187.7,433.1 192.1,423.5 196.7,414.8 201.4,407.0 206.2,400.1 211.1,394.0 216.0,388.8 220.9,384.4 225.8,380.7 230.5,377.8 235.2,375.5 239.6,373.9 243.8,372.8 247.7,372.1 251.0,371.8 253.4,371.8 255.9,371.8 259.2,372.1 263.1,372.8 267.3,373.9 271.7,375.5 276.4,377.8 281.1,380.7 286.0,384.4 290.9,388.8 295.8,394.0 300.7,400.1 305.5,407.0 310.2,414.8 314.8,423.5 319.2,433.1 323.4,443.5 327.3,454.9 331.0,467.1 334.4,480.2 337.4,494.1 340.2,508.9 342.5,524.3 344.5,540.5 346.1,557.4 347.4,574.9 348.3,593.0 348.9,611.5 349.1,630.6 349.2,650.0Z"/>
<path fill="#00bfff" d="M159.2,650.0 159.2,630.9 159.5,612.1 160.1,593.8 161.0,576.1 162.2,558.8 163.8,542.2 165.8,526.3 168.2,511.0 170.8,496.6 173.9,482.9 177.2,470.0 180.8,457.9 184.7,446.7 188.8,436.4 193.1,427.0 197.6,418.4 202.3,410.8 207.0,403.9 211.8,398.0 216.7,392.8 221.5,388.5 226.3,384.9 230.9,382.0 235.5,379.8 239.9,378.2 244.0,377.1 247.8,376.4 251.1,376.2 253.4,376.1 255.8,376.2 259.1,376.4 262.9,377.1 267.0,378.2 271.4,379.8 276.0,382.0 280.6,384.9 285.4,388.5 290.2,392.8 295.1,398.0 299.9,403.9 304.6,410.8 309.3,418.4 313.8,427.0 318.1,436.4 322.2,446.7 326.1,457.9 329.7,470.0 333.0,482.9 336.1,496.6 338.7,511.0 341.1,526.3 343.1,542.2 344.7,558.8 345.9,576.1 346.8,593.8 347.4,612.1 347.7,630.9 347.7,650.0Z"/>
<path fill="#00c3ff" d="M160.6,650.0 160.7,631.2 161.0,612.7 161.6,594.7 162.4,577.2 163.7,560.3 165.3,543.9 167.2,528.2 169.6,513.2 172.2,499.0 175.2,485.5 178.5,472.8 182.1,461.0 185.9,449.9 189.9,439.8 194.2,430.5 198.6,422.1 203.2,414.5 207.8,407.8 212.6,402.0 217.3,396.9 222.1,392.6 226.8,389.1 231.4,386.2 235.8,384.1 240.1,382.5 244.2,381.4 247.9,380.8 251.1,380.5 253.4,380.4 255.8,380.5 259.0,380.8 262.7,381.4 266.8,382.5 271.1,384.1 275.5,386.2 280.1,389.1 284.8,392.6 289.6,396.9 294.3,402.0 299.1,407.8 303.7,414.5 308.3,422.1 312.7,430.5 317.0,439.8 321.0,449.9 324.8,461.0 328.4,472.8 331.7,485.5 334.7,499.0 337.3,513.2 339.7,528.2 341.6,543.9 343.2,560.3 344.5,577.2 345.3,594.7 345.9,612.7 346.2,631.2 346.3,650.0Z"/>
<path fill="#00c7ff" d="M162.1,650.0 162.2,631.5 162.5,613.3 163.0,595.6 163.9,578.4 165.2,561.7 166.7,545.6 168.7,530.2 171.0,515.4 173.6,501.4 176.5,488.1 179.8,475.7 183.3,464.0 187.1,453.2 191.1,443.2 195.3,434.0 199.6,425.7 204.1,418.3 208.7,411.7 213.3,405.9 218.0,400.9 222.6,396.7 227.3,393.3 231.8,390.5 236.2,388.3 240.4,386.7 244.4,385.7 248.0,385.1 251.2,384.8 253.4,384.7 255.7,384.8 258.9,385.1 262.5,385.7 266.5,386.7 270.7,388.3 275.1,390.5 279.6,393.3 284.3,396.7 288.9,400.9 293.6,405.9 298.2,411.7 302.8,418.3 307.3,425.7 311.6,434.0 315.8,443.2 319.8,453.2 323.6,464.0 327.1,475.7 330.4,488.1 333.3,501.4 335.9,515.4 338.2,530.2 340.2,545.6 341.7,561.7 343.0,578.4 343.9,595.6 344.4,613.3 344.7,631.5 344.8,650.0Z"/>
<path fill="#00caff" d="M163.6,650.0 163.7,631.8 163.9,613.9 164.5,596.5 165.4,579.6 166.6,563.1 168.2,547.3 170.1,532.1 172.4,517.6 175.0,503.8 177.9,490.8 181.1,478.5 184.5,467.0 188.2,456.4 192.2,446.5 196.3,437.5 200.6,429.4 205.0,422.1 209.5,415.6 214.1,409.9 218.6,405.0 223.2,400.9 227.8,397.4 232.2,394.7 236.5,392.6 240.6,391.0 244.5,390.0 248.1,389.4 251.2,389.1 253.4,389.1 255.7,389.1 258.8,389.4 262.4,390.0 266.3,391.0 270.4,392.6 274.7,394.7 279.1,397.4 283.7,400.9 288.3,405.0 292.8,409.9 297.4,415.6 301.9,422.1 306.3,429.4 310.6,437.5 314.7,446.5 318.7,456.4 322.4,467.0 325.8,478.5 329.0,490.8 331.9,503.8 334.5,517.6 336.8,532.1 338.7,547.3 340.3,563.1 341.5,579.6 342.4,596.5 343.0,613.9 343.2,631.8 343.3,650.0Z"/>
<path fill="#00ceff" d="M165.1,650.0 165.1,632.1 165.4,614.5 166.0,597.4 166.9,580.7 168.1,564.6 169.6,549.0 171.5,534.1 173.8,519.8 176.3,506.2 179.2,493.4 182.3,481.3 185.8,470.0 189.4,459.6 193.3,449.9 197.3,441.1 201.6,433.0 205.9,425.9 210.3,419.5 214.8,413.9 219.3,409.1 223.8,405.0 228.2,401.6 232.6,398.9 236.8,396.8 240.9,395.3 244.7,394.3 248.2,393.7 251.3,393.4 253.4,393.4 255.6,393.4 258.7,393.7 262.2,394.3 266.0,395.3 270.1,396.8 274.3,398.9 278.7,401.6 283.1,405.0 287.6,409.1 292.1,413.9 296.6,419.5 301.0,425.9 305.3,433.0 309.6,441.1 313.6,449.9 317.5,459.6 321.1,470.0 324.6,481.3 327.7,493.4 330.6,506.2 333.1,519.8 335.4,534.1 337.3,549.0 338.8,564.6 340.0,580.7 340.9,597.4 341.5,614.5 341.8,632.1 341.8,650.0Z"/>
<path fill="#00d2ff" d="M166.6,650.0 166.6,632.4 166.9,615.1 167.5,598.3 168.3,581.9 169.5,566.0 171.1,550.7 173.0,536.0 175.2,522.0 177.7,508.7 180.5,496.0 183.6,484.2 187.0,473.1 190.6,462.8 194.4,453.3 198.4,444.6 202.5,436.7 206.8,429.6 211.1,423.4 215.5,417.9 220.0,413.1 224.4,409.1 228.7,405.8 233.0,403.2 237.2,401.1 241.1,399.6 244.9,398.6 248.3,398.0 251.3,397.8 253.4,397.7 255.6,397.8 258.6,398.0 262.0,398.6 265.8,399.6 269.7,401.1 273.9,403.2 278.2,405.8 282.5,409.1 286.9,413.1 291.4,417.9 295.8,423.4 300.1,429.6 304.4,436.7 308.5,444.6 312.5,453.3 316.3,462.8 319.9,473.1 323.3,484.2 326.4,496.0 329.2,508.7 331.7,522.0 333.9,536.0 335.8,550.7 337.4,566.0 338.6,581.9 339.4,598.3 340.0,615.1 340.3,632.4 340.3,650.0Z"/>
<path fill="#00d5ff" d="M168.0,650.0 168.1,632.7 168.4,615.7 168.9,599.2 169.8,583.1 171.0,567.5 172.5,552.4 174.4,538.0 176.6,524.2 179.1,511.1 181.8,498.7 184.9,487.0 188.2,476.1 191.8,466.0 195.5,456.6 199.4,448.1 203.5,440.4 207.7,433.4 212.0,427.2 216.3,421.8 220.6,417.2 225.0,413.2 229.2,410.0 233.4,407.4 237.5,405.4 241.4,403.9 245.1,402.9 248.4,402.3 251.4,402.1 253.4,402.0 255.5,402.1 258.5,402.3 261.8,402.9 265.5,403.9 269.4,405.4 273.5,407.4 277.7,410.0 281.9,413.2 286.3,417.2 290.6,421.8 294.9,427.2 299.2,433.4 303.4,440.4 307.5,448.1 311.4,456.6 315.1,466.0 318.7,476.1 322.0,487.0 325.1,498.7 327.8,511.1 330.3,524.2 332.5,538.0 334.4,552.4 335.9,567.5 337.1,583.1 338.0,599.2 338.5,615.7 338.8,632.7 338.9,650.0Z"/>
<path fill="#00d9ff" d="M169.5,650.0 169.6,633.0 169.9,616.3 170.4,600.0 171.3,584.2 172.5,568.9 174.0,554.1 175.8,539.9 178.0,526.4 180.4,513.5 183.2,501.3 186.2,489.9 189.4,479.1 192.9,469.2 196.6,460.0 200.5,451.6 204.5,444.0 208.6,437.2 212.8,431.1 217.0,425.8 221.3,421.2 225.5,417.4 229.7,414.2 233.8,411.6 237.8,409.6 241.6,408.2 245.2,407.2 248.5,406.6 251.4,406.4 253.4,406.3 255.5,406.4 258.4,406.6 261.7,407.2 265.3,408.2 269.1,409.6 273.1,411.6 277.2,414.2 281.4,417.4 285.6,421.2 289.9,425.8 294.1,431.1 298.3,437.2 302.4,444.0 306.4,451.6 310.3,460.0 314.0,469.2 317.5,479.1 320.7,489.9 323.7,501.3 326.5,513.5 328.9,526.4 331.1,539.9 332.9,554.1 334.4,568.9 335.6,584.2 336.5,600.0 337.0,616.3 337.3,633.0 337.4,650.0Z"/>
<path fill="#00dcff" d="M171.0,650.0 171.1,633.3 171.3,616.9 171.9,600.9 172.8,585.4 173.9,570.3 175.4,555.8 177.2,541.9 179.4,528.6 181.8,515.9 184.5,504.0 187.5,492.7 190.7,482.2 194.1,472.4 197.7,463.4 201.5,455.1 205.4,447.7 209.5,441.0 213.6,435.0 217.7,429.8 221.9,425.3 226.1,421.5 230.2,418.4 234.2,415.8 238.1,413.9 241.9,412.5 245.4,411.5 248.6,411.0 251.5,410.7 253.4,410.7 255.4,410.7 258.3,411.0 261.5,411.5 265.0,412.5 268.8,413.9 272.7,415.8 276.7,418.4 280.8,421.5 285.0,425.3 289.2,429.8 293.3,435.0 297.4,441.0 301.5,447.7 305.4,455.1 309.2,463.4 312.8,472.4 316.2,482.2 319.4,492.7 322.4,504.0 325.1,515.9 327.5,528.6 329.7,541.9 331.5,555.8 333.0,570.3 334.1,585.4 335.0,600.9 335.6,616.9 335.8,633.3 335.9,650.0Z"/>
<path fill="#00e0ff" d="M172.5,650.0 172.5,633.6 172.8,617.5 173.4,601.8 174.2,586.6 175.4,571.8 176.9,557.5 178.7,543.8 180.8,530.8 183.2,518.3 185.8,506.6 188.7,495.5 191.9,485.2 195.3,475.6 198.8,466.7 202.5,458.7 206.4,451.3 210.4,444.7 214.4,438.9 218.5,433.8 222.6,429.3 226.7,425.6 230.7,422.5 234.6,420.1 238.5,418.2 242.1,416.8 245.6,415.8 248.8,415.3 251.5,415.0 253.4,415.0 255.4,415.0 258.1,415.3 261.3,415.8 264.8,416.8 268.4,418.2 272.3,420.1 276.2,422.5 280.2,425.6 284.3,429.3 288.4,433.8 292.5,438.9 296.5,444.7 300.5,451.3 304.4,458.7 308.1,466.7 311.6,475.6 315.0,485.2 318.2,495.5 321.1,506.6 323.7,518.3 326.1,530.8 328.2,543.8 330.0,557.5 331.5,571.8 332.7,586.6 333.5,601.8 334.1,617.5 334.4,633.6 334.4,650.0Z"/>
<path fill="#00e3ff" d="M173.9,650.0 174.0,633.9 174.3,618.1 174.8,602.7 175.7,587.7 176.9,573.2 178.3,559.2 180.1,545.8 182.2,533.0 184.5,520.8 187.1,509.2 190.0,498.4 193.1,488.2 196.4,478.8 199.9,470.1 203.6,462.2 207.4,455.0 211.2,448.5 215.2,442.8 219.2,437.7 223.2,433.4 227.2,429.7 231.2,426.7 235.0,424.3 238.8,422.4 242.4,421.1 245.8,420.1 248.9,419.6 251.6,419.4 253.4,419.3 255.3,419.4 258.0,419.6 261.1,420.1 264.5,421.1 268.1,422.4 271.9,424.3 275.7,426.7 279.7,429.7 283.7,433.4 287.7,437.7 291.7,442.8 295.7,448.5 299.5,455.0 303.3,462.2 307.0,470.1 310.5,478.8 313.8,488.2 316.9,498.4 319.8,509.2 322.4,520.8 324.7,533.0 326.8,545.8 328.6,559.2 330.0,573.2 331.2,587.7 332.1,602.7 332.6,618.1 332.9,633.9 333.0,650.0Z"/>
<path fill="#00e7ff" d="M175.4,650.0 175.5,634.2 175.8,618.7 176.3,603.6 177.2,588.9 178.3,574.7 179.8,560.9 181.5,547.7 183.5,535.2 185.9,523.2 188.5,511.9 191.3,501.2 194.3,491.3 197.6,482.0 201.0,473.5 204.6,465.7 208.3,458.6 212.1,452.3 216.0,446.6 219.9,441.7 223.9,437.5 227.8,433.9 231.7,430.9 235.4,428.5 239.1,426.7 242.6,425.3 245.9,424.4 249.0,423.9 251.6,423.7 253.4,423.6 255.3,423.7 257.9,423.9 261.0,424.4 264.3,425.3 267.8,426.7 271.5,428.5 275.2,430.9 279.1,433.9 283.0,437.5 287.0,441.7 290.9,446.6 294.8,452.3 298.6,458.6 302.3,465.7 305.9,473.5 309.3,482.0 312.6,491.3 315.6,501.2 318.4,511.9 321.0,523.2 323.4,535.2 325.4,547.7 327.1,560.9 328.6,574.7 329.7,588.9 330.6,603.6 331.1,618.7 331.4,634.2 331.5,650.0Z"/>
<path fill="#00eaff" d="M176.9,650.0 177.0,634.5 177.3,619.3 177.8,604.5 178.6,590.1 179.8,576.1 181.2,562.6 182.9,549.7 184.9,537.3 187.2,525.6 189.8,514.5 192.5,504.1 195.5,494.3 198.7,485.2 202.1,476.9 205.6,469.2 209.3,462.3 213.0,456.0 216.8,450.5 220.6,445.7 224.5,441.5 228.3,438.0 232.1,435.1 235.8,432.7 239.4,430.9 242.9,429.6 246.1,428.7 249.1,428.2 251.6,428.0 253.4,427.9 255.3,428.0 257.8,428.2 260.8,428.7 264.0,429.6 267.5,430.9 271.1,432.7 274.8,435.1 278.6,438.0 282.4,441.5 286.3,445.7 290.1,450.5 293.9,456.0 297.6,462.3 301.3,469.2 304.8,476.9 308.2,485.2 311.4,494.3 314.4,504.1 317.1,514.5 319.7,525.6 322.0,537.3 324.0,549.7 325.7,562.6 327.1,576.1 328.3,590.1 329.1,604.5 329.6,619.3 329.9,634.5 330.0,650.0Z"/>
<path fill="#00ecff" d="M178.4,650.0 178.4,634.8 178.7,619.9 179.3,605.4 180.1,591.2 181.2,577.5 182.6,564.3 184.3,551.7 186.3,539.5 188.6,528.0 191.1,517.1 193.8,506.9 196.8,497.3 199.9,488.4 203.2,480.2 206.6,472.7 210.2,465.9 213.9,459.8 217.6,454.4 221.4,449.7 225.1,445.6 228.9,442.1 232.6,439.3 236.2,437.0 239.7,435.2 243.1,433.9 246.3,433.1 249.2,432.5 251.7,432.3 253.4,432.3 255.2,432.3 257.7,432.5 260.6,433.1 263.8,433.9 267.2,435.2 270.7,437.0 274.3,439.3 278.0,442.1 281.8,445.6 285.5,449.7 289.3,454.4 293.0,459.8 296.7,465.9 300.3,472.7 303.7,480.2 307.0,488.4 310.1,497.3 313.1,506.9 315.8,517.1 318.3,528.0 320.6,539.5 322.6,551.7 324.3,564.3 325.7,577.5 326.8,591.2 327.6,605.4 328.2,619.9 328.5,634.8 328.5,650.0Z"/>
<path fill="#00eeff" d="M179.9,650.0 179.9,635.1 180.2,620.5 180.8,606.2 181.6,592.4 182.7,579.0 184.1,566.0 185.8,553.6 187.7,541.7 189.9,530.4 192.4,519.8 195.1,509.7 198.0,500.3 201.0,491.6 204.3,483.6 207.7,476.2 211.2,469.6 214.7,463.6 218.4,458.3 222.1,453.6 225.8,449.6 229.4,446.2 233.1,443.4 236.6,441.2 240.1,439.5 243.4,438.2 246.4,437.4 249.3,436.9 251.7,436.6 253.4,436.6 255.2,436.6 257.6,436.9 260.5,437.4 263.5,438.2 266.8,439.5 270.3,441.2 273.8,443.4 277.5,446.2 281.1,449.6 284.8,453.6 288.5,458.3 292.2,463.6 295.7,469.6 299.2,476.2 302.6,483.6 305.9,491.6 308.9,500.3 311.8,509.7 314.5,519.8 317.0,530.4 319.2,541.7 321.1,553.6 322.8,566.0 324.2,579.0 325.3,592.4 326.1,606.2 326.7,620.5 327.0,635.1 327.0,650.0Z"/>
<path fill="#00f0ff" d="M181.3,650.0 181.4,635.4 181.7,621.1 182.2,607.1 183.1,593.6 184.1,580.4 185.5,567.7 187.2,555.6 189.1,543.9 191.3,532.9 193.7,522.4 196.3,512.6 199.2,503.4 202.2,494.8 205.4,487.0 208.7,479.8 212.1,473.2 215.6,467.4 219.2,462.2 222.8,457.6 226.4,453.7 230.0,450.4 233.5,447.6 237.0,445.4 240.4,443.7 243.6,442.5 246.6,441.7 249.4,441.2 251.8,441.0 253.4,440.9 255.1,441.0 257.5,441.2 260.3,441.7 263.3,442.5 266.5,443.7 269.9,445.4 273.4,447.6 276.9,450.4 280.5,453.7 284.1,457.6 287.7,462.2 291.3,467.4 294.8,473.2 298.2,479.8 301.5,487.0 304.7,494.8 307.7,503.4 310.6,512.6 313.2,522.4 315.6,532.9 317.8,543.9 319.7,555.6 321.4,567.7 322.8,580.4 323.8,593.6 324.7,607.1 325.2,621.1 325.5,635.4 325.6,650.0Z"/>
<path fill="#00f2ff" d="M182.8,650.0 182.9,635.7 183.2,621.7 183.7,608.0 184.5,594.7 185.6,581.8 187.0,569.4 188.6,557.5 190.5,546.1 192.6,535.3 195.0,525.0 197.6,515.4 200.4,506.4 203.3,498.0 206.4,490.3 209.7,483.3 213.0,476.9 216.5,471.1 220.0,466.1 223.5,461.6 227.0,457.7 230.5,454.5 234.0,451.8 237.4,449.7 240.7,448.0 243.8,446.8 246.8,446.0 249.5,445.5 251.8,445.3 253.4,445.2 255.1,445.3 257.4,445.5 260.1,446.0 263.1,446.8 266.2,448.0 269.5,449.7 272.9,451.8 276.4,454.5 279.9,457.7 283.4,461.6 286.9,466.1 290.4,471.1 293.9,476.9 297.2,483.3 300.5,490.3 303.6,498.0 306.5,506.4 309.3,515.4 311.9,525.0 314.3,535.3 316.4,546.1 318.3,557.5 319.9,569.4 321.3,581.8 322.4,594.7 323.2,608.0 323.7,621.7 324.0,635.7 324.1,650.0Z"/>
<path fill="#00f5ff" d="M184.3,650.0 184.4,636.0 184.7,622.3 185.2,608.9 186.0,595.9 187.1,583.3 188.4,571.1 190.0,559.5 191.9,548.3 194.0,537.7 196.3,527.7 198.8,518.3 201.6,509.4 204.5,501.3 207.5,493.7 210.7,486.8 214.0,480.5 217.3,474.9 220.7,469.9 224.2,465.6 227.7,461.8 231.1,458.6 234.5,456.0 237.8,453.9 241.0,452.3 244.1,451.1 246.9,450.3 249.6,449.8 251.9,449.6 253.4,449.6 255.0,449.6 257.3,449.8 260.0,450.3 262.8,451.1 265.9,452.3 269.1,453.9 272.4,456.0 275.8,458.6 279.2,461.8 282.7,465.6 286.2,469.9 289.6,474.9 292.9,480.5 296.2,486.8 299.4,493.7 302.4,501.3 305.3,509.4 308.1,518.3 310.6,527.7 312.9,537.7 315.0,548.3 316.9,559.5 318.5,571.1 319.8,583.3 320.9,595.9 321.7,608.9 322.2,622.3 322.5,636.0 322.6,650.0Z"/>
<path fill="#00f7ff" d="M185.8,650.0 185.9,636.3 186.1,622.9 186.7,609.8 187.5,597.1 188.5,584.7 189.8,572.8 191.4,561.4 193.2,550.5 195.3,540.1 197.6,530.3 200.1,521.1 202.7,512.5 205.6,504.5 208.6,497.1 211.7,490.3 214.9,484.2 218.2,478.7 221.5,473.8 224.9,469.5 228.3,465.9 231.6,462.7 234.9,460.2 238.2,458.1 241.3,456.5 244.3,455.4 247.1,454.6 249.7,454.1 251.9,453.9 253.4,453.9 255.0,453.9 257.2,454.1 259.8,454.6 262.6,455.4 265.6,456.5 268.7,458.1 272.0,460.2 275.3,462.7 278.6,465.9 282.0,469.5 285.4,473.8 288.7,478.7 292.0,484.2 295.2,490.3 298.3,497.1 301.3,504.5 304.2,512.5 306.8,521.1 309.3,530.3 311.6,540.1 313.7,550.5 315.5,561.4 317.1,572.8 318.4,584.7 319.4,597.1 320.2,609.8 320.8,622.9 321.0,636.3 321.1,650.0Z"/>
<path fill="#00f9ff" d="M187.3,650.0 187.4,636.6 187.6,623.5 188.2,610.7 188.9,598.2 190.0,586.2 191.3,574.5 192.8,563.4 194.6,552.7 196.6,542.5 198.9,533.0 201.3,523.9 203.9,515.5 206.7,507.7 209.6,500.4 212.6,493.8 215.8,487.8 219.0,482.5 222.3,477.7 225.5,473.5 228.8,469.9 232.1,466.9 235.4,464.4 238.5,462.3 241.6,460.8 244.5,459.6 247.2,458.9 249.8,458.4 251.9,458.2 253.4,458.2 255.0,458.2 257.1,458.4 259.7,458.9 262.4,459.6 265.3,460.8 268.4,462.3 271.5,464.4 274.8,466.9 278.1,469.9 281.4,473.5 284.6,477.7 287.9,482.5 291.1,487.8 294.3,493.8 297.3,500.4 300.2,507.7 303.0,515.5 305.6,523.9 308.0,533.0 310.3,542.5 312.3,552.7 314.1,563.4 315.6,574.5 316.9,586.2 318.0,598.2 318.7,610.7 319.3,623.5 319.5,636.6 319.6,650.0Z"/>
<path fill="#00faff" d="M188.8,650.0 188.8,636.9 189.1,624.1 189.6,611.6 190.4,599.4 191.4,587.6 192.7,576.2 194.2,565.3 196.0,554.9 197.9,545.0 200.1,535.6 202.5,526.8 205.1,518.5 207.8,510.9 210.6,503.8 213.6,497.4 216.7,491.5 219.8,486.2 223.0,481.6 226.2,477.5 229.4,474.0 232.6,471.0 235.8,468.5 238.9,466.6 241.9,465.0 244.7,463.9 247.4,463.2 249.8,462.8 252.0,462.6 253.4,462.5 254.9,462.6 257.1,462.8 259.5,463.2 262.2,463.9 265.0,465.0 268.0,466.6 271.1,468.5 274.3,471.0 277.5,474.0 280.7,477.5 283.9,481.6 287.1,486.2 290.2,491.5 293.3,497.4 296.3,503.8 299.1,510.9 301.8,518.5 304.4,526.8 306.8,535.6 309.0,545.0 310.9,554.9 312.7,565.3 314.2,576.2 315.5,587.6 316.5,599.4 317.3,611.6 317.8,624.1 318.1,636.9 318.1,650.0Z"/>
<path fill="#00fbff" d="M190.3,650.0 190.3,637.2 190.6,624.7 191.1,612.5 191.9,600.6 192.9,589.0 194.1,577.9 195.6,567.3 197.3,557.1 199.3,547.4 201.4,538.2 203.7,529.6 206.2,521.6 208.9,514.1 211.7,507.2 214.6,500.9 217.6,495.2 220.6,490.0 223.7,485.5 226.9,481.5 230.0,478.0 233.2,475.1 236.2,472.7 239.2,470.8 242.2,469.3 244.9,468.2 247.6,467.5 249.9,467.1 252.0,466.9 253.4,466.8 254.9,466.9 257.0,467.1 259.3,467.5 262.0,468.2 264.7,469.3 267.7,470.8 270.7,472.7 273.7,475.1 276.9,478.0 280.0,481.5 283.2,485.5 286.3,490.0 289.3,495.2 292.3,500.9 295.2,507.2 298.0,514.1 300.7,521.6 303.2,529.6 305.5,538.2 307.6,547.4 309.6,557.1 311.3,567.3 312.8,577.9 314.0,589.0 315.0,600.6 315.8,612.5 316.3,624.7 316.6,637.2 316.6,650.0Z"/>
<path fill="#00fbff" d="M191.7,650.0 191.8,637.5 192.1,625.3 192.6,613.3 193.3,601.7 194.3,590.5 195.5,579.6 197.0,569.2 198.7,559.3 200.6,549.8 202.7,540.9 204.9,532.5 207.4,524.6 210.0,517.3 212.7,510.6 215.5,504.4 218.5,498.8 221.5,493.8 224.5,489.3 227.6,485.4 230.6,482.1 233.7,479.2 236.7,476.9 239.6,475.0 242.4,473.6 245.2,472.5 247.7,471.8 250.0,471.4 252.0,471.2 253.4,471.2 254.9,471.2 256.9,471.4 259.2,471.8 261.7,472.5 264.5,473.6 267.3,475.0 270.2,476.9 273.2,479.2 276.3,482.1 279.3,485.4 282.4,489.3 285.4,493.8 288.4,498.8 291.4,504.4 294.2,510.6 296.9,517.3 299.5,524.6 302.0,532.5 304.2,540.9 306.3,549.8 308.2,559.3 309.9,569.2 311.4,579.6 312.6,590.5 313.6,601.7 314.3,613.3 314.8,625.3 315.1,637.5 315.2,650.0Z"/>
<path fill="#00fcff" d="M193.2,650.0 193.3,637.8 193.6,625.9 194.1,614.2 194.8,602.9 195.8,591.9 197.0,581.3 198.4,571.2 200.0,561.5 201.9,552.2 203.9,543.5 206.2,535.3 208.5,527.6 211.1,520.5 213.7,513.9 216.5,507.9 219.4,502.5 222.3,497.6 225.2,493.2 228.2,489.4 231.2,486.1 234.2,483.4 237.1,481.1 240.0,479.2 242.7,477.8 245.4,476.8 247.9,476.1 250.1,475.7 252.1,475.5 253.4,475.5 254.8,475.5 256.8,475.7 259.0,476.1 261.5,476.8 264.2,477.8 266.9,479.2 269.8,481.1 272.7,483.4 275.7,486.1 278.7,489.4 281.7,493.2 284.6,497.6 287.5,502.5 290.4,507.9 293.2,513.9 295.8,520.5 298.4,527.6 300.7,535.3 303.0,543.5 305.0,552.2 306.9,561.5 308.5,571.2 309.9,581.3 311.1,591.9 312.1,602.9 312.8,614.2 313.3,625.9 313.6,637.8 313.7,650.0Z"/>
<path fill="#00fcff" d="M194.7,650.0 194.8,638.1 195.1,626.5 195.5,615.1 196.3,604.1 197.2,593.4 198.4,583.0 199.8,573.1 201.4,563.7 203.2,554.7 205.2,546.1 207.4,538.1 209.7,530.6 212.2,523.7 214.8,517.3 217.5,511.4 220.2,506.1 223.1,501.3 226.0,497.1 228.9,493.4 231.8,490.2 234.7,487.5 237.5,485.3 240.3,483.5 243.0,482.1 245.6,481.1 248.0,480.4 250.2,480.0 252.1,479.8 253.4,479.8 254.8,479.8 256.7,480.0 258.9,480.4 261.3,481.1 263.9,482.1 266.6,483.5 269.4,485.3 272.2,487.5 275.1,490.2 278.0,493.4 280.9,497.1 283.8,501.3 286.7,506.1 289.4,511.4 292.1,517.3 294.7,523.7 297.2,530.6 299.5,538.1 301.7,546.1 303.7,554.7 305.5,563.7 307.1,573.1 308.5,583.0 309.7,593.4 310.6,604.1 311.4,615.1 311.8,626.5 312.1,638.1 312.2,650.0Z"/>
<path fill="#00fcff" d="M196.2,650.0 196.3,638.4 196.6,627.1 197.0,616.0 197.7,605.2 198.7,594.8 199.8,584.7 201.2,575.1 202.7,565.8 204.5,557.1 206.5,548.8 208.6,541.0 210.9,533.7 213.3,526.9 215.8,520.7 218.4,514.9 221.1,509.8 223.9,505.1 226.7,501.0 229.5,497.4 232.4,494.3 235.2,491.6 238.0,489.4 240.7,487.7 243.3,486.4 245.8,485.4 248.2,484.7 250.3,484.3 252.2,484.2 253.4,484.1 254.7,484.2 256.6,484.3 258.7,484.7 261.1,485.4 263.6,486.4 266.2,487.7 268.9,489.4 271.7,491.6 274.5,494.3 277.4,497.4 280.2,501.0 283.0,505.1 285.8,509.8 288.5,514.9 291.1,520.7 293.6,526.9 296.0,533.7 298.3,541.0 300.4,548.8 302.4,557.1 304.2,565.8 305.7,575.1 307.1,584.7 308.2,594.8 309.2,605.2 309.9,616.0 310.3,627.1 310.6,638.4 310.7,650.0Z"/>
<path fill="#00fdff" d="M197.7,650.0 197.8,638.7 198.0,627.7 198.5,616.9 199.2,606.4 200.1,596.2 201.2,586.4 202.6,577.0 204.1,568.0 205.8,559.5 207.7,551.4 209.8,543.8 212.0,536.7 214.4,530.1 216.8,524.0 219.4,518.5 222.0,513.4 224.7,508.9 227.4,504.9 230.2,501.3 233.0,498.3 235.7,495.8 238.4,493.6 241.0,491.9 243.6,490.6 246.0,489.7 248.3,489.0 250.4,488.6 252.2,488.5 253.4,488.4 254.7,488.5 256.5,488.6 258.6,489.0 260.9,489.7 263.3,490.6 265.9,491.9 268.5,493.6 271.2,495.8 273.9,498.3 276.7,501.3 279.5,504.9 282.2,508.9 284.9,513.4 287.5,518.5 290.1,524.0 292.5,530.1 294.9,536.7 297.1,543.8 299.2,551.4 301.1,559.5 302.8,568.0 304.3,577.0 305.7,586.4 306.8,596.2 307.7,606.4 308.4,616.9 308.9,627.7 309.1,638.7 309.2,650.0Z"/>
<path fill="#00fdff" d="M199.2,650.0 199.3,639.0 199.5,628.3 200.0,617.8 200.7,607.6 201.5,597.7 202.6,588.1 204.0,579.0 205.5,570.2 207.1,561.9 209.0,554.1 211.0,546.7 213.2,539.7 215.4,533.3 217.8,527.4 220.3,522.0 222.9,517.1 225.5,512.7 228.2,508.7 230.9,505.3 233.5,502.4 236.2,499.9 238.8,497.8 241.4,496.2 243.9,494.9 246.2,494.0 248.5,493.3 250.5,493.0 252.2,492.8 253.4,492.8 254.7,492.8 256.4,493.0 258.4,493.3 260.7,494.0 263.0,494.9 265.5,496.2 268.1,497.8 270.7,499.9 273.4,502.4 276.0,505.3 278.7,508.7 281.4,512.7 284.0,517.1 286.6,522.0 289.1,527.4 291.5,533.3 293.7,539.7 295.9,546.7 297.9,554.1 299.8,561.9 301.4,570.2 302.9,579.0 304.3,588.1 305.4,597.7 306.2,607.6 306.9,617.8 307.4,628.3 307.6,639.0 307.7,650.0Z"/>
<path fill="#00feff" d="M200.7,650.0 200.8,639.3 201.0,628.9 201.5,618.7 202.1,608.7 203.0,599.1 204.1,589.8 205.3,580.9 206.8,572.4 208.4,564.3 210.2,556.7 212.2,549.5 214.3,542.8 216.5,536.5 218.9,530.8 221.3,525.5 223.8,520.7 226.3,516.4 228.9,512.6 231.5,509.3 234.1,506.4 236.7,504.0 239.3,502.0 241.7,500.4 244.2,499.1 246.4,498.2 248.6,497.6 250.6,497.3 252.3,497.1 253.4,497.1 254.6,497.1 256.3,497.3 258.3,497.6 260.5,498.2 262.7,499.1 265.2,500.4 267.6,502.0 270.2,504.0 272.8,506.4 275.4,509.3 278.0,512.6 280.6,516.4 283.1,520.7 285.6,525.5 288.0,530.8 290.4,536.5 292.6,542.8 294.7,549.5 296.7,556.7 298.5,564.3 300.1,572.4 301.6,580.9 302.8,589.8 303.9,599.1 304.8,608.7 305.4,618.7 305.9,628.9 306.1,639.3 306.2,650.0Z"/>
<path fill="#00feff" d="M202.2,650.0 202.5,630.1 203.5,611.2 205.3,593.3 207.8,576.8 210.9,561.8 214.6,548.4 218.8,536.7 223.4,526.8 228.1,518.7 233.0,512.3 237.9,507.6 242.6,504.3 246.9,502.4 250.8,501.6 253.4,501.4 256.1,501.6 260.0,502.4 264.3,504.3 269.0,507.6 273.9,512.3 278.8,518.7 283.5,526.8 288.1,536.7 292.3,548.4 296.0,561.8 299.1,576.8 301.6,593.3 303.4,611.2 304.4,630.1 304.7,650.0Z"/>
<path fill="#00feff" d="M203.7,650.0 204.0,630.7 205.0,612.3 206.7,595.0 209.1,578.9 212.2,564.3 215.8,551.3 219.9,540.0 224.3,530.4 228.9,522.5 233.6,516.3 238.4,511.7 242.9,508.6 247.2,506.7 250.9,505.9 253.4,505.7 256.0,505.9 259.7,506.7 264.0,508.6 268.5,511.7 273.3,516.3 278.0,522.5 282.6,530.4 287.0,540.0 291.1,551.3 294.7,564.3 297.8,578.9 300.2,595.0 301.9,612.3 302.9,630.7 303.2,650.0Z"/>
<path fill="#00feff" d="M205.2,650.0 205.4,631.3 206.4,613.4 208.1,596.6 210.5,581.0 213.4,566.9 217.0,554.3 220.9,543.3 225.2,534.0 229.7,526.3 234.3,520.3 238.8,515.9 243.2,512.8 247.4,511.0 250.9,510.2 253.4,510.0 256.0,510.2 259.5,511.0 263.7,512.8 268.1,515.9 272.6,520.3 277.2,526.3 281.7,534.0 286.0,543.3 289.9,554.3 293.5,566.9 296.4,581.0 298.8,596.6 300.5,613.4 301.5,631.3 301.7,650.0Z"/>
<path fill="#00feff" d="M206.7,650.0 206.9,631.9 207.9,614.5 209.5,598.3 211.8,583.2 214.7,569.5 218.1,557.2 221.9,546.6 226.1,537.5 230.4,530.1 234.9,524.3 239.3,520.0 243.6,517.1 247.6,515.3 251.0,514.5 253.4,514.4 255.9,514.5 259.3,515.3 263.3,517.1 267.6,520.0 272.0,524.3 276.5,530.1 280.8,537.5 285.0,546.6 288.8,557.2 292.2,569.5 295.1,583.2 297.4,598.3 299.0,614.5 300.0,631.9 300.2,650.0Z"/>
<path fill="#00feff" d="M208.1,650.0 208.4,632.4 209.3,615.7 210.9,599.9 213.2,585.3 216.0,572.0 219.3,560.2 223.0,549.9 227.0,541.1 231.2,534.0 235.5,528.3 239.8,524.1 243.9,521.3 247.8,519.6 251.1,518.8 253.4,518.7 255.8,518.8 259.1,519.6 263.0,521.3 267.1,524.1 271.4,528.3 275.7,534.0 279.9,541.1 283.9,549.9 287.6,560.2 290.9,572.0 293.7,585.3 296.0,599.9 297.6,615.7 298.5,632.4 298.8,650.0Z"/>
<path fill="#00feff" d="M209.6,650.0 209.9,633.0 210.8,616.8 212.4,601.5 214.5,587.4 217.2,574.6 220.4,563.1 224.0,553.2 227.9,544.7 232.0,537.8 236.1,532.3 240.3,528.3 244.2,525.5 248.0,523.9 251.2,523.2 253.4,523.0 255.7,523.2 258.9,523.9 262.7,525.5 266.6,528.3 270.8,532.3 274.9,537.8 279.0,544.7 282.9,553.2 286.5,563.1 289.7,574.6 292.4,587.4 294.5,601.5 296.1,616.8 297.0,633.0 297.3,650.0Z"/>
<path fill="#00feff" d="M211.1,650.0 211.4,633.6 212.3,617.9 213.8,603.2 215.9,589.6 218.5,577.2 221.6,566.1 225.1,556.5 228.8,548.3 232.7,541.6 236.7,536.3 240.7,532.4 244.6,529.8 248.2,528.2 251.3,527.5 253.4,527.3 255.6,527.5 258.7,528.2 262.3,529.8 266.2,532.4 270.2,536.3 274.2,541.6 278.1,548.3 281.8,556.5 285.3,566.1 288.4,577.2 291.0,589.6 293.1,603.2 294.6,617.9 295.5,633.6 295.8,650.0Z"/>
<path fill="#00feff" d="M212.6,650.0 212.9,634.2 213.7,619.1 215.2,604.8 217.2,591.7 219.8,579.7 222.7,569.0 226.1,559.8 229.7,551.9 233.5,545.4 237.4,540.3 241.2,536.6 244.9,534.0 248.3,532.5 251.4,531.8 253.4,531.7 255.5,531.8 258.6,532.5 262.0,534.0 265.7,536.6 269.5,540.3 273.4,545.4 277.2,551.9 280.8,559.8 284.2,569.0 287.1,579.7 289.7,591.7 291.7,604.8 293.2,619.1 294.0,634.2 294.3,650.0Z"/>
<path fill="#00feff" d="M214.1,650.0 214.4,634.8 215.2,620.2 216.6,606.5 218.6,593.8 221.0,582.3 223.9,572.0 227.1,563.0 230.6,555.5 234.3,549.2 238.0,544.3 241.7,540.7 245.2,538.2 248.5,536.8 251.4,536.1 253.4,536.0 255.5,536.1 258.4,536.8 261.7,538.2 265.2,540.7 268.9,544.3 272.6,549.2 276.3,555.5 279.8,563.0 283.0,572.0 285.9,582.3 288.3,593.8 290.3,606.5 291.7,620.2 292.5,634.8 292.8,650.0Z"/>
<path fill="#00feff" d="M215.6,650.0 215.8,635.3 216.6,621.3 218.0,608.1 219.9,595.9 222.3,584.8 225.0,575.0 228.2,566.3 231.5,559.0 235.0,553.0 238.6,548.3 242.1,544.8 245.6,542.5 248.7,541.1 251.5,540.4 253.4,540.3 255.4,540.4 258.2,541.1 261.3,542.5 264.8,544.8 268.3,548.3 271.9,553.0 275.4,559.0 278.7,566.3 281.9,575.0 284.6,584.8 287.0,595.9 288.9,608.1 290.3,621.3 291.1,635.3 291.3,650.0Z"/>
<path fill="#00feff" d="M217.1,650.0 217.3,635.9 218.1,622.5 219.4,609.8 221.2,598.1 223.5,587.4 226.2,577.9 229.2,569.6 232.4,562.6 235.8,556.9 239.2,552.3 242.6,549.0 245.9,546.7 248.9,545.3 251.6,544.7 253.4,544.6 255.3,544.7 258.0,545.3 261.0,546.7 264.3,549.0 267.7,552.3 271.1,556.9 274.5,562.6 277.7,569.6 280.7,577.9 283.4,587.4 285.7,598.1 287.5,609.8 288.8,622.5 289.6,635.9 289.8,650.0Z"/>
<path fill="#00feff" d="M218.6,650.0 218.8,636.5 219.6,623.6 220.8,611.4 222.6,600.2 224.8,590.0 227.3,580.9 230.2,572.9 233.3,566.2 236.5,560.7 239.8,556.3 243.1,553.1 246.2,550.9 249.1,549.6 251.7,549.1 253.4,548.9 255.2,549.1 257.8,549.6 260.7,550.9 263.8,553.1 267.1,556.3 270.4,560.7 273.6,566.2 276.7,572.9 279.6,580.9 282.1,590.0 284.3,600.2 286.1,611.4 287.3,623.6 288.1,636.5 288.3,650.0Z"/>
<path fill="#00feff" d="M220.1,650.0 220.3,637.1 221.0,624.7 222.2,613.1 223.9,602.3 226.0,592.5 228.5,583.8 231.2,576.2 234.2,569.8 237.3,564.5 240.4,560.3 243.5,557.3 246.5,555.2 249.3,553.9 251.8,553.4 253.4,553.3 255.1,553.4 257.6,553.9 260.4,555.2 263.4,557.3 266.5,560.3 269.6,564.5 272.7,569.8 275.7,576.2 278.4,583.8 280.9,592.5 283.0,602.3 284.7,613.1 285.9,624.7 286.6,637.1 286.8,650.0Z"/>
<path fill="#00feff" d="M221.6,650.0 221.8,637.6 222.5,625.8 223.7,614.7 225.3,604.5 227.3,595.1 229.6,586.8 232.2,579.5 235.1,573.4 238.0,568.3 241.0,564.4 244.0,561.4 246.9,559.4 249.5,558.2 251.8,557.7 253.4,557.6 255.1,557.7 257.4,558.2 260.0,559.4 262.9,561.4 265.9,564.4 268.9,568.3 271.8,573.4 274.7,579.5 277.3,586.8 279.6,595.1 281.6,604.5 283.2,614.7 284.4,625.8 285.1,637.6 285.3,650.0Z"/>
<path fill="#00feff" d="M223.1,650.0 223.3,638.2 223.9,627.0 225.1,616.4 226.6,606.6 228.5,597.7 230.8,589.7 233.3,582.8 235.9,577.0 238.8,572.1 241.6,568.4 244.4,565.6 247.2,563.6 249.7,562.5 251.9,562.0 253.4,561.9 255.0,562.0 257.2,562.5 259.7,563.6 262.5,565.6 265.3,568.4 268.1,572.1 271.0,577.0 273.6,582.8 276.1,589.7 278.4,597.7 280.3,606.6 281.8,616.4 283.0,627.0 283.6,638.2 283.8,650.0Z"/>
<path fill="#00feff" d="M224.5,650.0 224.7,638.8 225.4,628.1 226.5,618.0 227.9,608.7 229.8,600.2 231.9,592.7 234.3,586.1 236.8,580.5 239.5,576.0 242.2,572.4 244.9,569.7 247.5,567.9 249.9,566.8 252.0,566.3 253.4,566.2 254.9,566.3 257.0,566.8 259.4,567.9 262.0,569.7 264.7,572.4 267.4,576.0 270.1,580.5 272.6,586.1 275.0,592.7 277.1,600.2 279.0,608.7 280.4,618.0 281.5,628.1 282.2,638.8 282.4,650.0Z"/>
<path fill="#00feff" d="M226.0,650.0 226.2,639.4 226.8,629.2 227.9,619.7 229.3,610.8 231.0,602.8 233.0,595.6 235.3,589.4 237.7,584.1 240.2,579.8 242.8,576.4 245.4,573.8 247.8,572.1 250.1,571.1 252.1,570.6 253.4,570.5 254.8,570.6 256.8,571.1 259.1,572.1 261.5,573.8 264.1,576.4 266.7,579.8 269.2,584.1 271.6,589.4 273.9,595.6 275.9,602.8 277.6,610.8 279.0,619.7 280.1,629.2 280.7,639.4 280.9,650.0Z"/>
<path fill="#00feff" d="M227.5,650.0 227.7,640.0 228.3,630.4 229.3,621.3 230.6,613.0 232.2,605.4 234.2,598.6 236.3,592.7 238.6,587.7 241.0,583.6 243.4,580.4 245.8,578.0 248.1,576.4 250.3,575.4 252.2,574.9 253.4,574.9 254.7,574.9 256.6,575.4 258.8,576.4 261.1,578.0 263.5,580.4 265.9,583.6 268.3,587.7 270.6,592.7 272.7,598.6 274.7,605.4 276.3,613.0 277.6,621.3 278.6,630.4 279.2,640.0 279.4,650.0Z"/>
<path fill="#00ffff" d="M229.0,650.0 229.2,640.5 229.7,631.5 230.7,623.0 231.9,615.1 233.5,607.9 235.3,601.6 237.3,596.0 239.5,591.3 241.7,587.4 244.0,584.4 246.3,582.1 248.4,580.6 250.5,579.7 252.2,579.3 253.4,579.2 254.7,579.3 256.4,579.7 258.5,580.6 260.6,582.1 262.9,584.4 265.2,587.4 267.4,591.3 269.6,596.0 271.6,601.6 273.4,607.9 275.0,615.1 276.2,623.0 277.2,631.5 277.7,640.5 277.9,650.0Z"/>
<path fill="#00ffff" d="M230.5,650.0 230.7,641.1 231.2,632.6 232.1,624.6 233.3,617.2 234.7,610.5 236.4,604.5 238.3,599.3 240.3,594.9 242.4,591.2 244.6,588.4 246.7,586.3 248.8,584.8 250.7,584.0 252.3,583.6 253.4,583.5 254.6,583.6 256.2,584.0 258.1,584.8 260.2,586.3 262.3,588.4 264.5,591.2 266.6,594.9 268.6,599.3 270.5,604.5 272.2,610.5 273.6,617.2 274.8,624.6 275.7,632.6 276.2,641.1 276.4,650.0Z"/>
<path fill="#00ffff" d="M232.0,650.0 232.2,641.7 232.7,633.7 233.5,626.3 234.6,619.4 236.0,613.1 237.5,607.5 239.3,602.6 241.2,598.4 243.2,595.1 245.2,592.4 247.2,590.4 249.1,589.1 250.8,588.3 252.4,587.9 253.4,587.8 254.5,587.9 256.1,588.3 257.8,589.1 259.7,590.4 261.7,592.4 263.7,595.1 265.7,598.4 267.6,602.6 269.4,607.5 270.9,613.1 272.3,619.4 273.4,626.3 274.2,633.7 274.7,641.7 274.9,650.0Z"/>
<path fill="#00ffff" d="M233.5,650.0 233.6,642.3 234.1,634.9 234.9,627.9 235.9,621.5 237.2,615.6 238.7,610.4 240.3,605.9 242.1,602.0 243.9,598.9 245.8,596.4 247.6,594.5 249.4,593.3 251.0,592.5 252.5,592.2 253.4,592.1 254.4,592.2 255.9,592.5 257.5,593.3 259.3,594.5 261.1,596.4 263.0,598.9 264.8,602.0 266.6,605.9 268.2,610.4 269.7,615.6 271.0,621.5 272.0,627.9 272.8,634.9 273.3,642.3 273.4,650.0Z"/>
<path fill="#00ffff" d="M235.0,650.0 235.1,642.8 235.6,636.0 236.3,629.6 237.2,623.6 238.4,618.2 239.8,613.4 241.3,609.2 242.9,605.6 244.6,602.7 246.4,600.4 248.1,598.7 249.7,597.5 251.2,596.8 252.5,596.5 253.4,596.5 254.4,596.5 255.7,596.8 257.2,597.5 258.8,598.7 260.5,600.4 262.3,602.7 264.0,605.6 265.6,609.2 267.1,613.4 268.5,618.2 269.7,623.6 270.6,629.6 271.3,636.0 271.8,642.8 271.9,650.0Z"/>
<path fill="#00ffff" d="M236.5,650.0 236.6,643.4 237.0,637.1 237.7,631.2 238.5,625.8 239.6,620.8 240.9,616.3 242.3,612.5 243.8,609.2 245.4,606.5 246.9,604.4 248.5,602.8 250.0,601.8 251.4,601.1 252.6,600.8 253.4,600.8 254.3,600.8 255.5,601.1 256.9,601.8 258.4,602.8 260.0,604.4 261.5,606.5 263.1,609.2 264.6,612.5 266.0,616.3 267.3,620.8 268.4,625.8 269.2,631.2 269.9,637.1 270.3,643.4 270.4,650.0Z"/>
<path fill="#00ffff" d="M238.0,650.0 238.1,644.0 238.5,638.3 239.1,632.9 239.9,627.9 240.9,623.3 242.0,619.3 243.3,615.8 244.7,612.8 246.1,610.3 247.5,608.4 248.9,607.0 250.3,606.0 251.6,605.4 252.7,605.2 253.4,605.1 254.2,605.2 255.3,605.4 256.6,606.0 258.0,607.0 259.4,608.4 260.8,610.3 262.2,612.8 263.6,615.8 264.9,619.3 266.0,623.3 267.0,627.9 267.8,632.9 268.4,638.3 268.8,644.0 268.9,650.0Z"/>
<path fill="#00ffff" d="M239.5,650.0 239.6,644.6 239.9,639.4 240.4,634.5 241.2,630.0 242.1,625.9 243.1,622.3 244.3,619.1 245.5,616.4 246.8,614.1 248.1,612.4 249.4,611.1 250.6,610.2 251.8,609.7 252.8,609.5 253.4,609.4 254.1,609.5 255.1,609.7 256.3,610.2 257.5,611.1 258.8,612.4 260.1,614.1 261.4,616.4 262.6,619.1 263.8,622.3 264.8,625.9 265.7,630.0 266.5,634.5 267.0,639.4 267.3,644.6 267.4,650.0Z"/>
<path fill="#00ffff" d="M240.9,650.0 241.0,645.2 241.3,640.5 241.8,636.2 242.5,632.1 243.3,628.5 244.2,625.2 245.3,622.4 246.4,619.9 247.5,618.0 248.7,616.4 249.8,615.3 250.9,614.5 252.0,614.0 252.8,613.8 253.4,613.8 254.1,613.8 254.9,614.0 256.0,614.5 257.1,615.3 258.2,616.4 259.4,618.0 260.5,619.9 261.6,622.4 262.7,625.2 263.6,628.5 264.4,632.1 265.1,636.2 265.6,640.5 265.9,645.2 266.0,650.0Z"/>
<path fill="#00ffff" d="M242.4,650.0 242.5,645.7 242.8,641.7 243.2,637.8 243.8,634.3 244.5,631.0 245.3,628.2 246.3,625.7 247.2,623.5 248.2,621.8 249.3,620.4 250.3,619.4 251.2,618.7 252.1,618.3 252.9,618.1 253.4,618.1 254.0,618.1 254.8,618.3 255.7,618.7 256.6,619.4 257.6,620.4 258.7,621.8 259.7,623.5 260.6,625.7 261.6,628.2 262.4,631.0 263.1,634.3 263.7,637.8 264.1,641.7 264.4,645.7 264.5,650.0Z"/>
<path fill="#00ffff" d="M243.9,650.0 244.0,646.3 244.2,642.8 244.6,639.5 245.1,636.4 245.7,633.6 246.5,631.1 247.2,628.9 248.1,627.1 248.9,625.6 249.8,624.4 250.7,623.5 251.5,622.9 252.3,622.6 253.0,622.4 253.4,622.4 253.9,622.4 254.6,622.6 255.4,622.9 256.2,623.5 257.1,624.4 258.0,625.6 258.8,627.1 259.7,628.9 260.4,631.1 261.2,633.6 261.8,636.4 262.3,639.5 262.7,642.8 262.9,646.3 263.0,650.0Z"/>
<path fill="#00ffff" d="M245.4,650.0 245.5,646.9 245.7,643.9 246.0,641.1 246.4,638.5 247.0,636.2 247.6,634.1 248.2,632.2 248.9,630.7 249.7,629.4 250.4,628.4 251.1,627.7 251.8,627.2 252.5,626.9 253.1,626.7 253.4,626.7 253.8,626.7 254.4,626.9 255.1,627.2 255.8,627.7 256.5,628.4 257.2,629.4 258.0,630.7 258.7,632.2 259.3,634.1 259.9,636.2 260.5,638.5 260.9,641.1 261.2,643.9 261.4,646.9 261.5,650.0Z"/>
<path fill="#00ffff" d="M246.9,650.0 247.0,647.5 247.1,645.0 247.4,642.8 247.7,640.7 248.2,638.7 248.7,637.0 249.2,635.5 249.8,634.3 250.4,633.2 251.0,632.4 251.6,631.8 252.1,631.4 252.7,631.2 253.1,631.1 253.4,631.0 253.8,631.1 254.2,631.2 254.8,631.4 255.3,631.8 255.9,632.4 256.5,633.2 257.1,634.3 257.7,635.5 258.2,637.0 258.7,638.7 259.2,640.7 259.5,642.8 259.8,645.0 259.9,647.5 260.0,650.0Z"/>
<path fill="#00ffff" d="M248.4,650.0 248.4,648.0 248.6,646.2 248.8,644.4 249.0,642.8 249.4,641.3 249.8,640.0 250.2,638.8 250.6,637.9 251.1,637.1 251.5,636.4 252.0,636.0 252.4,635.6 252.9,635.5 253.2,635.4 253.4,635.4 253.7,635.4 254.0,635.5 254.5,635.6 254.9,636.0 255.4,636.4 255.8,637.1 256.3,637.9 256.7,638.8 257.1,640.0 257.5,641.3 257.9,642.8 258.1,644.4 258.3,646.2 258.5,648.0 258.5,650.0Z"/>
<path fill="#00ffff" d="M249.9,650.0 249.9,648.6 250.0,647.3 250.2,646.1 250.3,644.9 250.6,643.9 250.8,642.9 251.1,642.1 251.5,641.4 251.8,640.9 252.1,640.4 252.4,640.1 252.7,639.9 253.0,639.8 253.3,639.7 253.4,639.7 253.6,639.7 253.9,639.8 254.2,639.9 254.5,640.1 254.8,640.4 255.1,640.9 255.4,641.4 255.8,642.1 256.1,642.9 256.3,643.9 256.6,644.9 256.7,646.1 256.9,647.3 257.0,648.6 257.0,650.0Z"/>
<path fill="#00ffff" d="M251.4,650.0 251.4,649.2 251.5,648.4 251.5,647.7 251.6,647.0 251.8,646.4 251.9,645.9 252.1,645.4 252.3,645.0 252.5,644.7 252.7,644.4 252.9,644.2 253.0,644.1 253.2,644.0 253.4,644.0 253.4,644.0 253.5,644.0 253.7,644.0 253.9,644.1 254.0,644.2 254.2,644.4 254.4,644.7 254.6,645.0 254.8,645.4 255.0,645.9 255.1,646.4 255.3,647.0 255.4,647.7 255.4,648.4 255.5,649.2 255.5,650.0Z"/>
<path fill="none" stroke="#0000ff" stroke-width="1.200" stroke-dasharray="7 2" d="M174.0,258.9 178.0,255.5 181.8,252.3 185.3,249.3 188.5,246.6 192.6,244.1 196.6,241.7 200.3,239.6 203.6,237.7 207.5,235.9 211.4,234.4 214.9,233.0 219.0,231.8 222.8,230.8 226.1,229.9 230.3,229.1 233.8,228.5 236.6,228.0 240.9,227.6 244.4,227.3 246.8,227.2 250.1,227.1 250.7,227.0 253.4,227.0 256.2,227.0 256.8,227.1 260.1,227.2 262.5,227.3 266.0,227.6 270.3,228.0 273.1,228.5 276.6,229.1 280.8,229.9 284.1,230.8 287.9,231.8 292.0,233.0 295.5,234.4 299.4,235.9 303.3,237.7 306.6,239.6 310.3,241.7 314.3,244.1 318.4,246.6 321.6,249.3 325.1,252.3 328.9,255.5 332.9,258.9"/><path fill="none" stroke="#0000ff" stroke-width="1.200" stroke-dasharray="3 5" d="M106.2,650.0 106.3,637.7 106.3,625.5 106.3,613.4 106.3,601.4 106.4,589.6 106.9,577.8 107.5,566.2 108.1,554.6 108.6,543.3 109.2,532.0 109.7,520.9 110.4,510.0 111.1,499.2 111.8,488.6 112.6,478.2 113.4,467.9 114.2,457.8 115.0,447.9 115.9,438.2 116.8,428.7 118.3,419.3 119.8,410.2 121.3,401.3 122.8,392.6 124.3,384.1 125.8,375.8 127.2,367.8 129.0,359.9 130.7,352.3 132.3,344.9 133.9,337.8 136.1,330.9 138.2,324.2 140.2,317.7 142.3,311.5 144.6,305.6 146.8,299.8 149.4,294.3 152.4,289.1 155.3,284.0 158.0,279.3 161.4,274.7 164.8,270.4 168.0,266.3 171.1,262.5 174.0,258.9"/><path fill="none" stroke="#0000ff" stroke-width="1.200" stroke-dasharray="3 5" d="M332.9,258.9 335.8,262.5 338.9,266.3 342.1,270.4 345.5,274.7 348.9,279.3 351.6,284.0 354.5,289.1 357.5,294.3 360.1,299.8 362.3,305.6 364.6,311.5 366.7,317.7 368.7,324.2 370.8,330.9 373.0,337.8 374.6,344.9 376.2,352.3 377.9,359.9 379.7,367.8 381.1,375.8 382.6,384.1 384.1,392.6 385.6,401.3 387.1,410.2 388.6,419.3 390.1,428.7 391.0,438.2 391.9,447.9 392.7,457.8 393.5,467.9 394.3,478.2 395.1,488.6 395.8,499.2 396.5,510.0 397.2,520.9 397.7,532.0 398.3,543.3 398.8,554.6 399.4,566.2 400.0,577.8 400.5,589.6 400.6,601.4 400.6,613.4 400.6,625.5 400.6,637.7 400.6,650.0"/>
</g></defs>
<g clip-path="url(#cl)"><use href="#blob"/><use href="#blob" x="509.400"/></g>
<g shape-rendering="crispEdges">
<rect x="12" y="65" width="988" height="1" fill="#ffff33"/>
<rect x="252" y="47" width="1" height="18" fill="#ffff33"/><rect x="253" y="45" width="2" height="20" fill="#ffff33"/>
<rect x="761" y="56" width="1" height="9" fill="#ffff33"/><rect x="762" y="45" width="2" height="20" fill="#ffff33"/>
<rect x="12" y="87" width="988" height="1" fill="#0050e0"/>
<path d="M134,175.5h11M139.5,170v11" stroke="#000"/><path d="M133,174.5h11M138.5,169v11" stroke="#fff"/>
<path d="M234,175.5h11M239.5,170v11" stroke="#000"/><path d="M233,174.5h11M238.5,169v11" stroke="#fff"/>
<path d="M334,175.5h11M339.5,170v11" stroke="#000"/><path d="M333,174.5h11M338.5,169v11" stroke="#fff"/>
<path d="M434,175.5h11M439.5,170v11" stroke="#000"/><path d="M433,174.5h11M438.5,169v11" stroke="#fff"/>
<path d="M534,175.5h11M539.5,170v11" stroke="#000"/><path d="M533,174.5h11M538.5,169v11" stroke="#fff"/>
<path d="M634,175.5h11M639.5,170v11" stroke="#000"/><path d="M633,174.5h11M638.5,169v11" stroke="#fff"/>
<path d="M734,175.5h11M739.5,170v11" stroke="#000"/><path d="M733,174.5h11M738.5,169v11" stroke="#fff"/>
<path d="M834,175.5h11M839.5,170v11" stroke="#000"/><path d="M833,174.5h11M838.5,169v11" stroke="#fff"/>
<path d="M134,294.5h11M139.5,289v11" stroke="#000"/><path d="M133,293.5h11M138.5,288v11" stroke="#fff"/>
<path d="M234,294.5h11M239.5,289v11" stroke="#000"/><path d="M233,293.5h11M238.5,288v11" stroke="#fff"/>
<path d="M334,294.5h11M339.5,289v11" stroke="#000"/><path d="M333,293.5h11M338.5,288v11" stroke="#fff"/>
<path d="M434,294.5h11M439.5,289v11" stroke="#000"/><path d="M433,293.5h11M438.5,288v11" stroke="#fff"/>
<path d="M534,294.5h11M539.5,289v11" stroke="#000"/><path d="M533,293.5h11M538.5,288v11" stroke="#fff"/>
<path d="M634,294.5h11M639.5,289v11" stroke="#000"/><path d="M633,293.5h11M638.5,288v11" stroke="#fff"/>
<path d="M734,294.5h11M739.5,289v11" stroke="#000"/><path d="M733,293.5h11M738.5,288v11" stroke="#fff"/>
<path d="M834,294.5h11M839.5,289v11" stroke="#000"/><path d="M833,293.5h11M838.5,288v11" stroke="#fff"/>
<path d="M134,413.5h11M139.5,408v11" stroke="#000"/><path d="M133,412.5h11M138.5,407v11" stroke="#fff"/>
<path d="M234,413.5h11M239.5,408v11" stroke="#000"/><path d="M233,412.5h11M238.5,407v11" stroke="#fff"/>
<path d="M334,413.5h11M339.5,408v11" stroke="#000"/><path d="M333,412.5h11M338.5,407v11" stroke="#fff"/>
<path d="M434,413.5h11M439.5,408v11" stroke="#000"/><path d="M433,412.5h11M438.5,407v11" stroke="#fff"/>
<path d="M534,413.5h11M539.5,408v11" stroke="#000"/><path d="M533,412.5h11M538.5,407v11" stroke="#fff"/>
<path d="M634,413.5h11M639.5,408v11" stroke="#000"/><path d="M633,412.5h11M638.5,407v11" stroke="#fff"/>
<path d="M734,413.5h11M739.5,408v11" stroke="#000"/><path d="M733,412.5h11M738.5,407v11" stroke="#fff"/>
<path d="M834,413.5h11M839.5,408v11" stroke="#000"/><path d="M833,412.5h11M838.5,407v11" stroke="#fff"/>
<path d="M134,532.5h11M139.5,527v11" stroke="#000"/><path d="M133,531.5h11M138.5,526v11" stroke="#fff"/>
<path d="M234,532.5h11M239.5,527v11" stroke="#000"/><path d="M233,531.5h11M238.5,526v11" stroke="#fff"/>
<path d="M334,532.5h11M339.5,527v11" stroke="#000"/><path d="M333,531.5h11M338.5,526v11" stroke="#fff"/>
<path d="M434,532.5h11M439.5,527v11" stroke="#000"/><path d="M433,531.5h11M438.5,526v11" stroke="#fff"/>
<path d="M534,532.5h11M539.5,527v11" stroke="#000"/><path d="M533,531.5h11M538.5,526v11" stroke="#fff"/>
<path d="M634,532.5h11M639.5,527v11" stroke="#000"/><path d="M633,531.5h11M638.5,526v11" stroke="#fff"/>
<path d="M734,532.5h11M739.5,527v11" stroke="#000"/><path d="M733,531.5h11M738.5,526v11" stroke="#fff"/>
<path d="M834,532.5h11M839.5,527v11" stroke="#000"/><path d="M833,531.5h11M838.5,526v11" stroke="#fff"/>
</g>
</svg>
<div class="lab" style="left:20px;top:166px">1280 Hz</div>
<div class="lab" style="left:20px;top:285px">960 Hz</div>
<div class="lab" style="left:20px;top:404px">640 Hz</div>
<div class="lab" style="left:20px;top:523px">320 Hz</div>
<div class="lab" style="left:118px;top:634px">0.2 sec</div>
<div class="lab" style="left:218px;top:634px">0.3 sec</div>
<div class="lab" style="left:318px;top:634px">0.4 sec</div>
<div class="lab" style="left:418px;top:634px">0.5 sec</div>
<div class="lab" style="left:518px;top:634px">0.6 sec</div>
<div class="lab" style="left:618px;top:634px">0.7 sec</div>
<div class="lab" style="left:718px;top:634px">0.8 sec</div>
<div class="lab" style="left:818px;top:634px">0.9 sec</div>
<!-- v scrollbar -->
<div class="a chk" style="left:1000px;top:44px;width:14px;height:606px"></div>
<div class="btn" style="left:1000px;top:44px;width:14px;height:16px"><svg class="a" style="left:3px;top:4px" width="5" height="3" shape-rendering="crispEdges"><path d="M2,0h1v1h1v1h1v1h-5v-1h1v-1h1z"/></svg></div>
<div class="btn" style="left:1000px;top:619px;width:14px;height:15px"></div>
<div class="btn" style="left:1000px;top:634px;width:14px;height:16px"><svg class="a" style="left:3px;top:7px" width="5" height="3" shape-rendering="crispEdges"><path d="M0,0h5v1h-1v1h-1v1h-1v-1h-1v-1h-1z"/></svg></div>
<!-- h scrollbar -->
<div class="a chk" style="left:12px;top:650px;width:988px;height:14px"></div>
<div class="a g" style="left:1000px;top:650px;width:14px;height:14px"></div>
<div class="btn" style="left:12px;top:650px;width:16px;height:14px"><svg class="a" style="left:5px;top:3px" width="3" height="5" shape-rendering="crispEdges"><path d="M2,0h1v5h-1v-1h-1v-1h-1v-1h1v-1h1z"/></svg></div>
<div class="btn" style="left:985px;top:650px;width:15px;height:14px"><svg class="a" style="left:5px;top:3px" width="3" height="5" shape-rendering="crispEdges"><path d="M0,0h1v1h1v1h1v1h-1v1h-1v1h-1z"/></svg></div>
<div class="btn" style="left:233px;top:650px;width:15px;height:14px"></div>
<!-- bottom panel -->
<div class="a" style="left:12px;top:664px;width:1002px;height:74px;background:#0a246a"></div>
<div class="a g" style="left:62px;top:672px;width:211px;height:65px;border-top:1px solid #000;border-left:1px solid #000;border-bottom:1px solid #fff;border-right:1px solid #fff"></div>
<div class="t11" style="left:137px;top:677px;letter-spacing:-0.100px">Analyze File</div>
<div class="t11" style="left:79px;top:691px;letter-spacing:-0.300px">Time (msec) :</div>
<div class="t11" style="left:79px;top:705px;letter-spacing:-0.050px">Frequency (Hz) :</div>
<div class="t11" style="left:79px;top:719px;letter-spacing:-0.200px">Signal Level (dB)</div>
<div class="t11" style="left:179px;top:691px;letter-spacing:-0.100px">00000 +/- 00</div>
<div class="t11" style="left:179px;top:705px;letter-spacing:-0.100px">00000 +/- 00</div>
<div class="t11" style="left:179px;top:719px;letter-spacing:-0.100px">000</div>
<div class="a g" style="left:345px;top:672px;width:204px;height:65px;border-top:1px solid #000;border-left:1px solid #000;border-bottom:1px solid #fff;border-right:1px solid #fff"></div>
<div class="t11" style="left:358px;top:677px;letter-spacing:-0.190px">Display Band (Hz) :</div>
<div class="t11" style="left:358px;top:691px;letter-spacing:-0.190px">Display Channels :</div>
<div class="t11" style="left:358px;top:705px;letter-spacing:-0.190px">Sample Rate (Hz) :</div>
<div class="t11" style="left:358px;top:719px;letter-spacing:-0.240px">Sample Length (kb) :</div>
<div class="t11" style="left:463px;top:677px;letter-spacing:-0.100px">0 to 2756</div>
<div class="t11" style="left:463px;top:691px;letter-spacing:-0.100px">Monaural</div>
<div class="t11" style="left:463px;top:705px;letter-spacing:-0.100px">44100</div>
<div class="t11" style="left:463px;top:719px;letter-spacing:-0.100px">126</div>
<div class="pb" style="left:814px;top:674px;width:42px;height:20px;line-height:19px;letter-spacing:-0.100px">Play</div>
<div class="pb" style="left:856px;top:674px;width:77px;height:20px;line-height:19px;letter-spacing:-0.200px">Play Wdw</div>
<div class="pb" style="left:814px;top:695px;width:119px;height:20px;line-height:19px;letter-spacing:-0.350px">Toggle Grid<div class="a" style="left:3px;top:3px;right:3px;bottom:3px;border:1px dotted #000"></div></div>
<div class="pb" style="left:814px;top:716px;width:119px;height:21px;line-height:20px;color:#808080;text-shadow:1px 1px 0 #fff">Stop</div>
<!-- red annotations -->
<svg class="a" style="left:0;top:0" width="1024" height="768" viewBox="0 0 1024 768">
<rect x="7" y="655.400" width="925" height="1.600" fill="#dfe8ee"/>
<g fill="#d8360f">
<path d="M0,127H6.500L7.200,657H2V640L0,600Z"/>
<path d="M1,126L4.500,122.500L28,152.500L23.500,156Z"/>
<path d="M6,657H947V662.200L6,662.800Z"/>
<path d="M914,647L915.600,643.600L947.200,657.600V662H940L930,656.500Z"/>
<path d="M945,663.200L950.300,666.600L925.500,686.500L920.800,683Z"/>
</g>
</svg>
<div class="a" style="left:33px;top:96px;font:bold 64px 'Liberation Serif',serif;color:#d8360f;line-height:64px">f</div>
<div class="a" style="left:940px;top:573px;font:bold 64px 'Liberation Serif',serif;color:#d8360f;line-height:64px;transform-origin:0 100%;transform:scaleY(1.120)">t</div>
<!-- taskbar -->
<div class="a g" style="left:0;top:738px;width:1024px;height:30px;border-top:1px solid #d4d0c8;box-shadow:inset 0 1px 0 #fff"></div>
<div class="tb" style="left:2px;width:52px"><svg style="left:1px;top:1px" width="17" height="17" viewBox="0 0 18 18"><path d="M2,3c2,-1.500 4,-1.500 6,-0.500l-1,5.500c-2,-1 -4,-1 -6,0.500z" fill="#e86820"/><path d="M9,3c2,1 4,1 6,-0.500l-1,6c-2,1.500 -4,1.500 -6,0.500z" fill="#88c030"/><path d="M1,9.500c2,-1.500 4,-1.500 6,-0.500l-1,6c-2,-1 -4,-1 -6,0.500z" fill="#3878e0"/><path d="M8,10.500c2,1 4,1 6,-0.500l-1,6c-2,1.500 -4,1.500 -6,0.500z" fill="#f0b818"/></svg><span style="left:18.500px;font:bold 12px 'Liberation Sans',sans-serif;top:4px">Start</span></div>
<div class="tb" style="left:59px"><svg width="16" height="16" viewBox="0 0 16 16"><rect width="16" height="16" fill="#000"/><circle cx="8" cy="8" r="6.500" fill="#c8b030"/><circle cx="7" cy="7" r="4" fill="#e8e060"/><path d="M6,4l3,4l-1,4M9,8l2,1" stroke="#806010" stroke-width="1.200" fill="none"/></svg><span>AOLpress - [Versuc...</span></div>
<div class="tb chk" style="left:196px;border-color:#404040 #fff #fff #404040;box-shadow:inset 1px 1px 0 #808080"><svg style="left:4px;top:3px" width="16" height="16" viewBox="0 0 16 16" shape-rendering="crispEdges"><rect width="16" height="16" fill="#000"/><path d="M0,0h15v15h-1v-13h-12v13h-2z" fill="#00cccc"/><rect x="2" y="2" width="11" height="9" fill="#0000b4"/><path d="M2,6h1v5h-1zM3,7h1v4h-1zM4,8h1v3h-1zM5,9h1v2h-1zM6,9h1v2h-1zM7,8h1v3h-1zM8,7h1v4h-1zM9,4h1v7h-1zM10,8h1v3h-1zM11,9h1v2h-1zM12,10h1v1h-1z" fill="#00ffff"/><rect x="2" y="13" width="11" height="1" fill="#c8c8c8"/><rect x="9" y="12" width="1" height="3" fill="#00c0c0"/></svg><span style="left:24px;top:5px;font:bold 11.500px 'Liberation Sans',sans-serif;letter-spacing:0.100px">sound24.wav</span></div>
<div class="tb" style="left:333px"><svg width="18" height="16" viewBox="0 0 18 16"><path d="M1,4h5M3.500,1.500v5" stroke="#d02010" stroke-width="1.6"/><path d="M9,3c1,-2 3.500,-3 4.500,-1.500c0.500,1 -1.500,2 -1.500,4c0,2 3,4 4,9h-5c0,-2 -1,-3 -2,-4c-1,-1.500 -1,-5 0,-7.500z" fill="#f8a020" stroke="#401000" stroke-width="1"/><path d="M12,4c-1,2 0,5 2,8" stroke="#ffe860" stroke-width="1.400" fill="none"/><path d="M1,15c0,-3 3,-5 6,-4c2,1 2.500,3 2,4z" fill="#f07018" stroke="#401000" stroke-width="1"/><circle cx="12.800" cy="2.600" r="0.900" fill="#fff"/></svg><span>Thumbs.td4 in Thu...</span></div>
<div class="tb" style="left:470px"><svg width="18" height="16" viewBox="0 0 18 16"><path d="M1,4h5M3.500,1.500v5" stroke="#d02010" stroke-width="1.6"/><path d="M9,3c1,-2 3.500,-3 4.500,-1.500c0.500,1 -1.500,2 -1.500,4c0,2 3,4 4,9h-5c0,-2 -1,-3 -2,-4c-1,-1.500 -1,-5 0,-7.500z" fill="#f8a020" stroke="#401000" stroke-width="1"/><path d="M12,4c-1,2 0,5 2,8" stroke="#ffe860" stroke-width="1.400" fill="none"/><path d="M1,15c0,-3 3,-5 6,-4c2,1 2.500,3 2,4z" fill="#f07018" stroke="#401000" stroke-width="1"/><circle cx="12.800" cy="2.600" r="0.900" fill="#fff"/></svg><span>Thumbs.td4 in Thu...</span></div>
<div class="tb" style="left:607px"><svg width="16" height="16" viewBox="0 0 16 16" shape-rendering="crispEdges"><rect x="0" y="1" width="16" height="14" fill="#000"/><rect x="0" y="1" width="16" height="2" fill="#3060c0"/><rect x="0" y="1" width="16" height="1" fill="#90b0e8"/><text x="1.500" y="11.500" font-family="Liberation Sans,sans-serif" font-size="7" font-weight="bold" fill="#fff">C:\</text></svg><span>Eingabeaufforderung</span></div>
<div class="tb" style="left:744px"><svg width="18" height="16" viewBox="0 0 18 16"><path d="M1.500,4.500c0,-1.500 1,-2.500 2.500,-2.500h3l1.500,1.500h6c1.500,0 2,1 2,2v7c0,1.500 -1,2 -2,2h-11c-1.500,0 -2,-1 -2,-2z" fill="#e8d060" stroke="#a08020" stroke-width="1"/><path d="M2.500,7h13v5.500c0,0.500 -0.500,1 -1,1h-11c-0.500,0 -1,-0.500 -1,-1z" fill="#f8f098"/></svg><span>volks4th</span></div>
<div class="a" style="left:890px;top:746px;width:16px;height:16px;background:#0a246a;color:#fff;font-size:10.500px;line-height:16px;text-align:center;letter-spacing:-0.500px;will-change:transform">DE</div>
<div class="a" style="left:910px;top:742px;width:2px;height:24px;border-left:1px solid #808080;border-right:1px solid #fff"></div>
<div class="a" style="left:917px;top:747px"><svg width="18" height="15" viewBox="0 0 18 15" shape-rendering="crispEdges"><path d="M4.500,0.500v2h2v1h2v-1h2v1h2v2" stroke="#000" fill="none"/><rect x="0.500" y="5.500" width="17" height="8" rx="1.500" fill="#fff" stroke="#000" shape-rendering="auto"/><path d="M3,8.500h12M3,10.500h12" stroke="#404040" stroke-dasharray="1 1"/></svg></div>
<div class="a" style="left:938px;top:742px;width:2px;height:24px;border-left:1px solid #808080;border-right:1px solid #fff"></div>
<div class="a" style="left:945px;top:742px;width:78px;height:24px;border:1px solid;border-color:#808080 #fff #fff #808080"></div>
<svg class="a" style="left:949px;top:750px" width="10" height="8" viewBox="0 0 10 8"><path d="M4.200,1L1.500,4L4.200,7M8.200,1L5.500,4L8.200,7" stroke="#000" stroke-width="1.500" fill="none"/></svg>
<div class="a" style="left:964px;top:746px"><svg width="14" height="16" viewBox="0 0 16 18"><path d="M8,0.800c2,1.500 4,2 7,2c0,7 -2,12 -7,14.500c-5,-2.500 -7,-7.500 -7,-14.500c3,0 5,-0.500 7,-2z" fill="#d83030" stroke="#5070c0" stroke-width="1.300"/><path d="M8,2.500c1.500,1 3.500,1.500 5.500,1.500c0,2 -0.300,4 -0.800,5.500h-9.400c-0.500,-1.500 -0.800,-3.500 -0.800,-5.500c2,0 4,-0.500 5.500,-1.500z" fill="#f06060"/><path d="M5.500,6l5,5M10.500,6l-5,5" stroke="#fff" stroke-width="2"/></svg></div>
<div class="t11" style="left:986px;top:748px">13:14</div>
</body></html>
